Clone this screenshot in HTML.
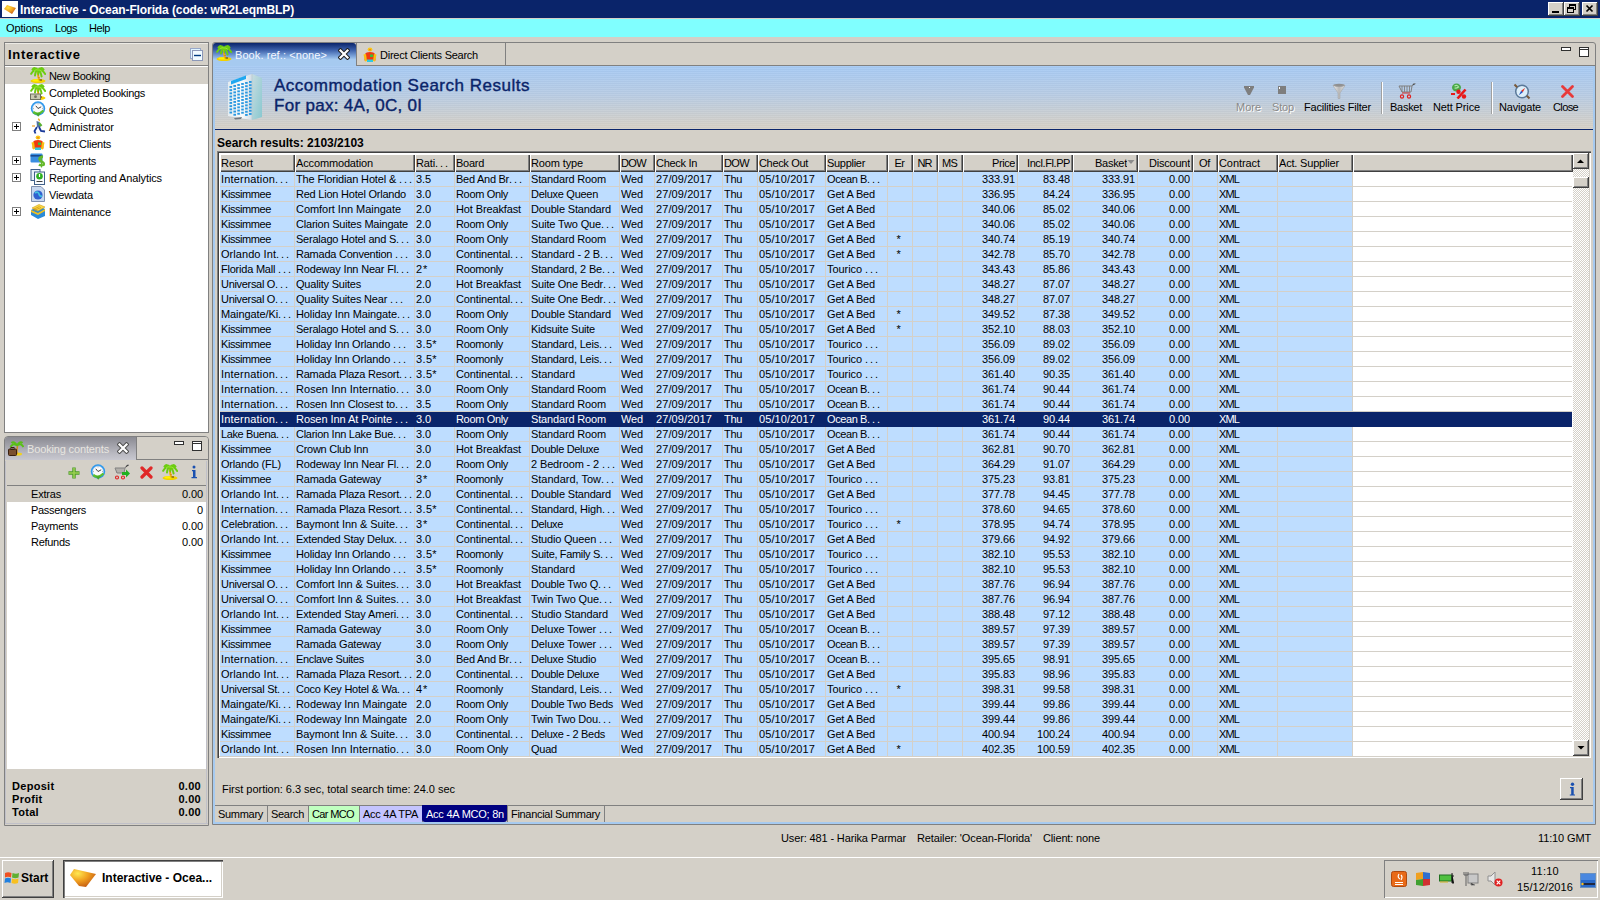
<!DOCTYPE html><html><head><meta charset="utf-8"><style>
html,body{margin:0;padding:0;}body{width:1600px;height:900px;overflow:hidden;position:relative;background:#D4D0C8;font-family:"Liberation Sans",sans-serif;}
.t{position:absolute;white-space:nowrap;}.b{position:absolute;}
</style></head><body>
<div class="b" style="left:0px;top:0px;width:1600px;height:18px;background:#0A246A"></div>
<div class="b" style="left:0px;top:18px;width:1600px;height:1px;background:#D4D0C8"></div>
<div class="b" style="left:2px;top:1px;width:16px;height:16px;background:#fff"></div>
<svg class="b" style="left:2px;top:1px" width="16" height="16" viewBox="0 0 16 16"><defs><radialGradient id="og" cx="0.35" cy="0.3" r="0.8"><stop offset="0" stop-color="#FFE040"/><stop offset="0.5" stop-color="#F0A020"/><stop offset="1" stop-color="#C05010"/></radialGradient></defs><path d="M2 8 L5 4 L14 7 L10 13 Z" fill="url(#og)"/></svg>
<div class="t" style="left:20px;top:3px;font:bold 12px/14px 'Liberation Sans', sans-serif;color:#fff;letter-spacing:-0.1px">Interactive - Ocean-Florida (code: wR2LeqmBLP)</div>
<div class="b" style="left:1548px;top:2px;width:16px;height:14px;background:#D4D0C8;box-shadow:inset -1px -1px 0 #404040, inset 1px 1px 0 #FFFFFF, inset -2px -2px 0 #808080, inset 2px 2px 0 #D4D0C8;"></div>
<div class="b" style="left:1564px;top:2px;width:16px;height:14px;background:#D4D0C8;box-shadow:inset -1px -1px 0 #404040, inset 1px 1px 0 #FFFFFF, inset -2px -2px 0 #808080, inset 2px 2px 0 #D4D0C8;"></div>
<div class="b" style="left:1582px;top:2px;width:16px;height:14px;background:#D4D0C8;box-shadow:inset -1px -1px 0 #404040, inset 1px 1px 0 #FFFFFF, inset -2px -2px 0 #808080, inset 2px 2px 0 #D4D0C8;"></div>
<div class="b" style="left:1552px;top:11px;width:7px;height:2px;background:#000"></div>
<svg class="b" style="left:1564px;top:2px" width="16" height="14" viewBox="0 0 16 14"><rect x="5.5" y="2.5" width="6" height="5" fill="none" stroke="#000"/><rect x="5" y="2" width="7" height="2" fill="#000"/><rect x="3.5" y="5.5" width="6" height="5" fill="#D4D0C8" stroke="#000"/><rect x="3" y="5" width="7" height="2" fill="#000"/></svg>
<svg class="b" style="left:1582px;top:2px" width="16" height="14" viewBox="0 0 16 14"><path d="M4.5 3.5 L10.5 9.5 M10.5 3.5 L4.5 9.5" stroke="#000" stroke-width="1.7"/></svg>
<div class="b" style="left:0px;top:19px;width:1600px;height:18px;background:#80FFFF"></div>
<div class="t" style="left:6px;top:21px;font:11px/14px 'Liberation Sans', sans-serif;color:#000;letter-spacing:-0.132px;">Options</div>
<div class="t" style="left:55px;top:21px;font:11px/14px 'Liberation Sans', sans-serif;color:#000;letter-spacing:-0.465px;">Logs</div>
<div class="t" style="left:89px;top:21px;font:11px/14px 'Liberation Sans', sans-serif;color:#000;letter-spacing:-0.406px;">Help</div>
<div class="b" style="left:4px;top:42px;width:205px;height:391px;background:#fff;border:1px solid #808080;box-sizing:border-box"></div>
<div class="b" style="left:5px;top:43px;width:203px;height:22px;background:#D4D0C8"></div>
<div class="b" style="left:5px;top:43px;width:203px;height:1px;background:#ECEAE4"></div>
<div class="b" style="left:5px;top:65px;width:203px;height:1px;background:#808080"></div>
<div class="t" style="left:8px;top:48px;font:bold 13px/14px 'Liberation Sans', sans-serif;color:#000;letter-spacing:0.7px">Interactive</div>
<svg class="b" style="left:190px;top:48px" width="13" height="13" viewBox="0 0 13 13"><rect x="0.5" y="0.5" width="10" height="10" fill="#E0F4FF" stroke="#98A8C8"/><rect x="2.5" y="2.5" width="10" height="10" fill="#F0FAFF" stroke="#8C98B8"/><path d="M4 7.5 L11 7.5" stroke="#003A80" stroke-width="1.4"/></svg>
<div class="b" style="left:5px;top:67px;width:203px;height:17px;background:#D4D0C8"></div>
<svg class="b" style="left:30px;top:67px" width="16" height="16" viewBox="0 0 16 16"><ellipse cx="8" cy="14" rx="7.5" ry="2" fill="#F2D000"/><ellipse cx="6.5" cy="13.4" rx="4" ry="1.1" fill="#FFF200"/><path d="M7.6 4.5 Q8 10 9.4 13.5" stroke="#F0B010" stroke-width="2" fill="none"/><path d="M8.3 7.8 L9 8.4 M8.9 10.4 L9.5 11" stroke="#A04A10" stroke-width="1"/><path d="M9.5 13 L12 13" stroke="#503010" stroke-width="1"/><path d="M8 3 Q4 1.5 1.2 6.8 M8 3 Q12 1.5 15.2 7 M8 3 Q5.5 3.5 5 8.5 M8 3 Q10.5 3.5 11.6 9.5 M8 3 Q4.5 -0.5 2.5 2.5 M8 3 Q11.5 -0.5 13.5 2.5 M8 3 Q8.5 4 8.3 7" stroke="#6CCC10" stroke-width="2" fill="none" stroke-linecap="round"/><path d="M8 3 Q6 2 4 4 M8 3 Q10 2.5 12 4.5" stroke="#98E830" stroke-width="1" fill="none"/></svg>
<div class="t" style="left:49px;top:69px;font:11px/14px 'Liberation Sans', sans-serif;color:#000;letter-spacing:-0.348px;">New Booking</div>
<svg class="b" style="left:30px;top:84px" width="16" height="16" viewBox="0 0 16 16"><ellipse cx="8" cy="14" rx="7.5" ry="2" fill="#F2D000"/><ellipse cx="6.5" cy="13.4" rx="4" ry="1.1" fill="#FFF200"/><path d="M7.6 4.5 Q8 10 9.4 13.5" stroke="#F0B010" stroke-width="2" fill="none"/><path d="M8.3 7.8 L9 8.4 M8.9 10.4 L9.5 11" stroke="#A04A10" stroke-width="1"/><path d="M9.5 13 L12 13" stroke="#503010" stroke-width="1"/><path d="M8 3 Q4 1.5 1.2 6.8 M8 3 Q12 1.5 15.2 7 M8 3 Q5.5 3.5 5 8.5 M8 3 Q10.5 3.5 11.6 9.5 M8 3 Q4.5 -0.5 2.5 2.5 M8 3 Q11.5 -0.5 13.5 2.5 M8 3 Q8.5 4 8.3 7" stroke="#6CCC10" stroke-width="2" fill="none" stroke-linecap="round"/><path d="M8 3 Q6 2 4 4 M8 3 Q10 2.5 12 4.5" stroke="#98E830" stroke-width="1" fill="none"/><rect x="0.5" y="10" width="10" height="5.5" fill="#C8C8B0" stroke="#707060" stroke-width="1"/><circle cx="5.5" cy="12.7" r="1.4" fill="#707060"/></svg>
<div class="t" style="left:49px;top:86px;font:11px/14px 'Liberation Sans', sans-serif;color:#000;letter-spacing:-0.306px;">Completed Bookings</div>
<svg class="b" style="left:30px;top:101px" width="16" height="16" viewBox="0 0 16 16"><circle cx="8" cy="7.5" r="7.2" fill="#2E98EC"/><circle cx="8" cy="7.5" r="5.4" fill="#FAFAFA" stroke="#9CC8F0" stroke-width="0.6"/><path d="M8 7.5 L5.8 4.8 M8 7.5 L11.2 5.8" stroke="#303030" stroke-width="0.9"/><path d="M8 2.6 L8 3.4 M12.9 7.5 L12.1 7.5 M3.1 7.5 L3.9 7.5" stroke="#808080" stroke-width="0.7"/><path d="M3.2 11 Q8 15 13.5 9.5" stroke="#5CC030" stroke-width="2.4" fill="none"/><path d="M5.8 12.2 L8.2 15.8 L10.8 12.2 Z" fill="#48A828"/></svg>
<div class="t" style="left:49px;top:103px;font:11px/14px 'Liberation Sans', sans-serif;color:#000;letter-spacing:-0.220px;">Quick Quotes</div>
<svg class="b" style="left:30px;top:118px" width="16" height="16" viewBox="0 0 16 16"><path d="M8 1 Q10 1.5 9 3" stroke="#F0B030" stroke-width="1.4" fill="none"/><path d="M6.5 3 L9.5 4 L10.5 9 L7 9 Z" fill="#5070A0"/><path d="M9 5 L11.5 8" stroke="#58B030" stroke-width="2.2"/><path d="M7 9 L4.5 13 L5.5 15.5 M9 9 L11 13 L15 13.5" stroke="#1A3A9A" stroke-width="1.8" fill="none"/><path d="M2 8 L5 8" stroke="#F0A020" stroke-width="1.2"/></svg>
<div class="t" style="left:49px;top:120px;font:11px/14px 'Liberation Sans', sans-serif;color:#000;letter-spacing:0.016px;">Administrator</div>
<svg class="b" style="left:12px;top:122px" width="9" height="9" viewBox="0 0 9 9"><rect x="0.5" y="0.5" width="8" height="8" fill="#fff" stroke="#808080"/><path d="M2 4.5 L7 4.5 M4.5 2 L4.5 7" stroke="#000" stroke-width="1"/></svg>
<svg class="b" style="left:30px;top:135px" width="16" height="16" viewBox="0 0 16 16"><ellipse cx="8" cy="2.6" rx="2.4" ry="2" fill="#F8C818"/><ellipse cx="8" cy="2.8" rx="1" ry="0.6" fill="#F06010"/><path d="M3 7 Q4 5 8 5 Q12 5 13 7 L13.5 13.5 L2.5 13.5 Z" fill="#F03A10"/><path d="M1.5 7.5 L4 7 L5 14 L3 14.5 Z" fill="#F8C010"/><path d="M14.5 7.5 L12 7 L11 14 L13 14.5 Z" fill="#F8C010"/><rect x="8" y="7.5" width="3" height="2.5" fill="#38C040"/><rect x="5" y="12.5" width="6" height="2.5" fill="#30C8E0"/></svg>
<div class="t" style="left:49px;top:137px;font:11px/14px 'Liberation Sans', sans-serif;color:#000;letter-spacing:-0.243px;">Direct Clients</div>
<svg class="b" style="left:30px;top:152px" width="16" height="16" viewBox="0 0 16 16"><rect x="0.5" y="1.5" width="12" height="9" rx="1" fill="#3A8EE0"/><rect x="0.5" y="3" width="12" height="1.6" fill="#1A4A90"/><path d="M13 5 Q9 4.5 9.5 7.5 Q10 9.5 12.5 10 Q14.5 11 13.5 13 Q11 14 9 12.5" stroke="#64B82A" stroke-width="2.4" fill="none"/><path d="M11.5 3.5 L11.5 15.5" stroke="#64B82A" stroke-width="1.2"/></svg>
<div class="t" style="left:49px;top:154px;font:11px/14px 'Liberation Sans', sans-serif;color:#000;letter-spacing:-0.240px;">Payments</div>
<svg class="b" style="left:12px;top:156px" width="9" height="9" viewBox="0 0 9 9"><rect x="0.5" y="0.5" width="8" height="8" fill="#fff" stroke="#808080"/><path d="M2 4.5 L7 4.5 M4.5 2 L4.5 7" stroke="#000" stroke-width="1"/></svg>
<svg class="b" style="left:30px;top:169px" width="16" height="16" viewBox="0 0 16 16"><rect x="1" y="0.5" width="9" height="11" fill="#E8F0F8" stroke="#40608A" stroke-width="1"/><rect x="4.5" y="3" width="10" height="12.5" fill="#F8FBFF" stroke="#40608A" stroke-width="1"/><circle cx="9.5" cy="7.2" r="3.3" fill="#2EB020"/><path d="M9.5 5 L9.5 8" stroke="#fff" stroke-width="1.2"/><path d="M6.5 12.5 L12.5 12.5" stroke="#404040" stroke-width="1"/></svg>
<div class="t" style="left:49px;top:171px;font:11px/14px 'Liberation Sans', sans-serif;color:#000;letter-spacing:-0.112px;">Reporting and Analytics</div>
<svg class="b" style="left:12px;top:173px" width="9" height="9" viewBox="0 0 9 9"><rect x="0.5" y="0.5" width="8" height="8" fill="#fff" stroke="#808080"/><path d="M2 4.5 L7 4.5 M4.5 2 L4.5 7" stroke="#000" stroke-width="1"/></svg>
<svg class="b" style="left:30px;top:186px" width="16" height="16" viewBox="0 0 16 16"><path d="M1.5 0.5 L11 0.5 L14.5 4 L14.5 15.5 L1.5 15.5 Z" fill="#C8D8F0" stroke="#8090B0" stroke-width="1"/><circle cx="8" cy="9" r="4.6" fill="#3060D0"/><path d="M5 7 Q8 5 9 8 Q10 11 12 10" stroke="#40C0E0" stroke-width="1.8" fill="none"/></svg>
<div class="t" style="left:49px;top:188px;font:11px/14px 'Liberation Sans', sans-serif;color:#000;letter-spacing:-0.133px;">Viewdata</div>
<svg class="b" style="left:30px;top:203px" width="16" height="16" viewBox="0 0 16 16"><path d="M1 7 L9 3 L15 6 L15 13 L8 16 L1 12 Z" fill="#2A8AD8"/><path d="M1 7 L8 10 L15 6 L15 8 L8 12 L1 9 Z" fill="#F0C020"/><path d="M2 5 L9 1.5 L15 4 L8 8 Z" fill="#F8D848" stroke="#D0A010" stroke-width="0.6"/><path d="M3 6.5 L9.5 3.5 M4 7.5 L11 4.5" stroke="#D09010" stroke-width="0.7"/></svg>
<div class="t" style="left:49px;top:205px;font:11px/14px 'Liberation Sans', sans-serif;color:#000;letter-spacing:-0.091px;">Maintenance</div>
<svg class="b" style="left:12px;top:207px" width="9" height="9" viewBox="0 0 9 9"><rect x="0.5" y="0.5" width="8" height="8" fill="#fff" stroke="#808080"/><path d="M2 4.5 L7 4.5 M4.5 2 L4.5 7" stroke="#000" stroke-width="1"/></svg>
<div class="b" style="left:4px;top:436px;width:205px;height:390px;background:#D4D0C8;border:1px solid #808080;box-sizing:border-box;border-radius:4px 4px 0 0"></div>
<div class="b" style="left:5px;top:437px;width:131px;height:23px;background:linear-gradient(#8A8A92,#B8B8C0 70%,#C8C8D0);border-radius:3px 0 0 0"></div>
<div class="b" style="left:136px;top:437px;width:72px;height:22px;background:#D4D0C8;border-left:1px solid #808080;box-sizing:border-box;border-radius:0 3px 0 0"></div>
<div class="b" style="left:136px;top:459px;width:72px;height:1px;background:#808080"></div>
<svg class="b" style="left:8px;top:440px" width="16" height="16" viewBox="0 0 16 16"><ellipse cx="10" cy="14" rx="4" ry="1.5" fill="#F2D21B"/><path d="M9.5 6 Q8.5 10 9 14" stroke="#D08A1C" stroke-width="1.5" fill="none"/><path d="M9 5.5 Q5 2.5 2.5 7 M9 5.5 Q13 2.5 15.5 7 M9 5.5 Q6 0.5 3.5 3 M9 5.5 Q12 0.5 14.5 3" stroke="#58C018" stroke-width="2" fill="none"/><rect x="0.5" y="9" width="8" height="6.5" rx="1" fill="#7A5030" stroke="#3A2010"/><rect x="3" y="7.5" width="3" height="2" fill="none" stroke="#3A2010"/></svg>
<div class="t" style="left:27px;top:442px;font:11px/14px 'Liberation Sans', sans-serif;color:#E8E6E0;letter-spacing:-0.149px;">Booking contents</div>
<svg class="b" style="left:117px;top:442px" width="12" height="12" viewBox="0 0 12 12"><path d="M2.5 2.5 L9.5 9.5 M9.5 2.5 L2.5 9.5" stroke="#505050" stroke-width="4.2" stroke-linecap="square"/><path d="M2.5 2.5 L9.5 9.5 M9.5 2.5 L2.5 9.5" stroke="#fff" stroke-width="2.2" stroke-linecap="square"/></svg>
<svg class="b" style="left:174px;top:441px" width="10" height="4" viewBox="0 0 10 4"><rect x="0.5" y="0.5" width="9" height="3" fill="#fff" stroke="#303030"/></svg>
<svg class="b" style="left:192px;top:441px" width="10" height="10" viewBox="0 0 10 10"><rect x="0.5" y="0.5" width="9" height="9" fill="#fff" stroke="#303030"/><path d="M1 2.5 L9 2.5" stroke="#303030"/></svg>
<div class="b" style="left:7px;top:461px;width:199px;height:24px;background:#D4D0C8"></div>
<div class="b" style="left:7px;top:485px;width:199px;height:1px;background:#808080"></div>
<div class="b" style="left:5px;top:461px;width:1px;height:362px;background:#C0C0C8"></div>
<svg class="b" style="left:67px;top:466px" width="14" height="14" viewBox="0 0 14 14"><path d="M7 1.5 L7 12.5 M1.5 7 L12.5 7" stroke="#4A9A2A" stroke-width="3.4"/><path d="M7 2 L7 12 M2 7 L12 7" stroke="#9AD050" stroke-width="1.6"/></svg>
<svg class="b" style="left:90px;top:464px" width="16" height="16" viewBox="0 0 16 16"><circle cx="8" cy="7.5" r="7.2" fill="#2E98EC"/><circle cx="8" cy="7.5" r="5.4" fill="#FAFAFA" stroke="#9CC8F0" stroke-width="0.6"/><path d="M8 7.5 L5.8 4.8 M8 7.5 L11.2 5.8" stroke="#303030" stroke-width="0.9"/><path d="M8 2.6 L8 3.4 M12.9 7.5 L12.1 7.5 M3.1 7.5 L3.9 7.5" stroke="#808080" stroke-width="0.7"/><path d="M3.2 11 Q8 15 13.5 9.5" stroke="#5CC030" stroke-width="2.4" fill="none"/><path d="M5.8 12.2 L8.2 15.8 L10.8 12.2 Z" fill="#48A828"/></svg>
<svg class="b" style="left:114px;top:464px" width="16" height="16" viewBox="0 0 16 16"><path d="M1 4 L11 4 L10 9 L3 9 Z" fill="none" stroke="#808080" stroke-width="1"/><path d="M3 4 L3 9 M5 4 L5 9 M7 4 L7 9 M9 4 L9 9 M11 4 L13 1 L15 1" stroke="#808080" stroke-width="0.8"/><circle cx="3" cy="13.5" r="1.5" fill="none" stroke="#E02020" stroke-width="1.1"/><circle cx="9" cy="13.5" r="1.5" fill="none" stroke="#E02020" stroke-width="1.1"/><path d="M8 8 L12 8 L12 5.5 L16 9.5 L12 13.5 L12 11 L8 11 Z" fill="#20B020"/></svg>
<svg class="b" style="left:140px;top:466px" width="13" height="13" viewBox="0 0 13 13"><path d="M2 2 L11 11 M11 2 L2 11" stroke="#E02828" stroke-width="3.2" stroke-linecap="round"/></svg>
<svg class="b" style="left:162px;top:464px" width="16" height="16" viewBox="0 0 16 16"><ellipse cx="8" cy="14" rx="7.5" ry="2" fill="#F2D000"/><ellipse cx="6.5" cy="13.4" rx="4" ry="1.1" fill="#FFF200"/><path d="M7.6 4.5 Q8 10 9.4 13.5" stroke="#F0B010" stroke-width="2" fill="none"/><path d="M8.3 7.8 L9 8.4 M8.9 10.4 L9.5 11" stroke="#A04A10" stroke-width="1"/><path d="M9.5 13 L12 13" stroke="#503010" stroke-width="1"/><path d="M8 3 Q4 1.5 1.2 6.8 M8 3 Q12 1.5 15.2 7 M8 3 Q5.5 3.5 5 8.5 M8 3 Q10.5 3.5 11.6 9.5 M8 3 Q4.5 -0.5 2.5 2.5 M8 3 Q11.5 -0.5 13.5 2.5 M8 3 Q8.5 4 8.3 7" stroke="#6CCC10" stroke-width="2" fill="none" stroke-linecap="round"/><path d="M8 3 Q6 2 4 4 M8 3 Q10 2.5 12 4.5" stroke="#98E830" stroke-width="1" fill="none"/></svg>
<svg class="b" style="left:189px;top:465px" width="10" height="14" viewBox="0 0 10 14"><circle cx="5" cy="2" r="1.5" fill="#1A50B0"/><path d="M3 5 L6.5 5 L6.5 12 L8 12 L8 13.2 L2.5 13.2 L2.5 12 L4 12 L4 6.2 L3 6.2 Z" fill="#1A50B0"/></svg>
<div class="b" style="left:7px;top:486px;width:199px;height:283px;background:#fff"></div>
<div class="b" style="left:7px;top:486px;width:199px;height:16px;background:#D4D0C8"></div>
<div class="t" style="left:31px;top:487px;font:11px/14px 'Liberation Sans', sans-serif;color:#000;letter-spacing:-0.198px;">Extras</div>
<div class="t" style="right:1397px;top:487px;font:11px/14px 'Liberation Sans', sans-serif;color:#000;text-align:right;letter-spacing:-0.105px;">0.00</div>
<div class="t" style="left:31px;top:503px;font:11px/14px 'Liberation Sans', sans-serif;color:#000;letter-spacing:-0.309px;">Passengers</div>
<div class="t" style="right:1397px;top:503px;font:11px/14px 'Liberation Sans', sans-serif;color:#000;text-align:right;letter-spacing:-0.125px;">0</div>
<div class="t" style="left:31px;top:519px;font:11px/14px 'Liberation Sans', sans-serif;color:#000;letter-spacing:-0.240px;">Payments</div>
<div class="t" style="right:1397px;top:519px;font:11px/14px 'Liberation Sans', sans-serif;color:#000;text-align:right;letter-spacing:-0.105px;">0.00</div>
<div class="t" style="left:31px;top:535px;font:11px/14px 'Liberation Sans', sans-serif;color:#000;letter-spacing:-0.283px;">Refunds</div>
<div class="t" style="right:1397px;top:535px;font:11px/14px 'Liberation Sans', sans-serif;color:#000;text-align:right;letter-spacing:-0.105px;">0.00</div>
<div class="t" style="left:12px;top:779px;font:bold 11px/14px 'Liberation Sans', sans-serif;color:#000;letter-spacing:0.3px">Deposit</div>
<div class="t" style="right:1399px;top:779px;font:bold 11px/14px 'Liberation Sans', sans-serif;color:#000;text-align:right;letter-spacing:0.3px">0.00</div>
<div class="t" style="left:12px;top:792px;font:bold 11px/14px 'Liberation Sans', sans-serif;color:#000;letter-spacing:0.3px">Profit</div>
<div class="t" style="right:1399px;top:792px;font:bold 11px/14px 'Liberation Sans', sans-serif;color:#000;text-align:right;letter-spacing:0.3px">0.00</div>
<div class="t" style="left:12px;top:805px;font:bold 11px/14px 'Liberation Sans', sans-serif;color:#000;letter-spacing:0.3px">Total</div>
<div class="t" style="right:1399px;top:805px;font:bold 11px/14px 'Liberation Sans', sans-serif;color:#000;text-align:right;letter-spacing:0.3px">0.00</div>
<div class="b" style="left:5px;top:823px;width:203px;height:1px;background:#C0C0C8"></div>
<div class="b" style="left:206px;top:461px;width:1px;height:362px;background:#C0C0C8"></div>
<div class="b" style="left:212px;top:42px;width:1384px;height:783px;background:#D4D0C8;border:1px solid #808080;box-sizing:border-box;border-radius:3px 3px 0 0"></div>
<div class="b" style="left:213px;top:66px;width:2px;height:758px;background:#A6CAF0"></div>
<div class="b" style="left:1593px;top:66px;width:2px;height:758px;background:#A6CAF0"></div>
<div class="b" style="left:213px;top:822px;width:1382px;height:2px;background:#A6CAF0"></div>
<div class="b" style="left:356px;top:65px;width:1239px;height:1px;background:#808080"></div>
<div class="b" style="left:213px;top:43px;width:143px;height:23px;background:linear-gradient(#0A246A 0%, #3A5EA8 30%, #7EA6DC 58%, #A6CAF0 72%, #A6CAF0 100%);border-radius:3px 3px 0 0"></div>
<svg class="b" style="left:216px;top:45px" width="16" height="16" viewBox="0 0 16 16"><ellipse cx="8" cy="14" rx="7.5" ry="2" fill="#F2D000"/><ellipse cx="6.5" cy="13.4" rx="4" ry="1.1" fill="#FFF200"/><path d="M7.6 4.5 Q8 10 9.4 13.5" stroke="#F0B010" stroke-width="2" fill="none"/><path d="M8.3 7.8 L9 8.4 M8.9 10.4 L9.5 11" stroke="#A04A10" stroke-width="1"/><path d="M9.5 13 L12 13" stroke="#503010" stroke-width="1"/><path d="M8 3 Q4 1.5 1.2 6.8 M8 3 Q12 1.5 15.2 7 M8 3 Q5.5 3.5 5 8.5 M8 3 Q10.5 3.5 11.6 9.5 M8 3 Q4.5 -0.5 2.5 2.5 M8 3 Q11.5 -0.5 13.5 2.5 M8 3 Q8.5 4 8.3 7" stroke="#6CCC10" stroke-width="2" fill="none" stroke-linecap="round"/><path d="M8 3 Q6 2 4 4 M8 3 Q10 2.5 12 4.5" stroke="#98E830" stroke-width="1" fill="none"/></svg>
<div class="t" style="left:235px;top:48px;font:11px/14px 'Liberation Sans', sans-serif;color:#F4F8FF;letter-spacing:0.082px;">Book. ref.: &lt;none&gt;</div>
<svg class="b" style="left:338px;top:48px" width="12" height="12" viewBox="0 0 12 12"><path d="M2.5 2.5 L9.5 9.5 M9.5 2.5 L2.5 9.5" stroke="#202020" stroke-width="4.2" stroke-linecap="square"/><path d="M2.5 2.5 L9.5 9.5 M9.5 2.5 L2.5 9.5" stroke="#fff" stroke-width="2.2" stroke-linecap="square"/></svg>
<div class="b" style="left:505px;top:43px;width:1px;height:22px;background:#808080"></div>
<div class="b" style="left:356px;top:43px;width:1px;height:22px;background:#808080"></div>
<svg class="b" style="left:362px;top:47px" width="16" height="16" viewBox="0 0 16 16"><ellipse cx="8" cy="2.6" rx="2.4" ry="2" fill="#F8C818"/><ellipse cx="8" cy="2.8" rx="1" ry="0.6" fill="#F06010"/><path d="M3 7 Q4 5 8 5 Q12 5 13 7 L13.5 13.5 L2.5 13.5 Z" fill="#F03A10"/><path d="M1.5 7.5 L4 7 L5 14 L3 14.5 Z" fill="#F8C010"/><path d="M14.5 7.5 L12 7 L11 14 L13 14.5 Z" fill="#F8C010"/><rect x="8" y="7.5" width="3" height="2.5" fill="#38C040"/><rect x="5" y="12.5" width="6" height="2.5" fill="#30C8E0"/></svg>
<div class="t" style="left:380px;top:48px;font:11px/14px 'Liberation Sans', sans-serif;color:#000;letter-spacing:-0.254px;">Direct Clients Search</div>
<svg class="b" style="left:1561px;top:47px" width="10" height="4" viewBox="0 0 10 4"><rect x="0.5" y="0.5" width="9" height="3" fill="#fff" stroke="#303030"/></svg>
<svg class="b" style="left:1579px;top:47px" width="10" height="10" viewBox="0 0 10 10"><rect x="0.5" y="0.5" width="9" height="9" fill="#fff" stroke="#303030"/><path d="M1 2.5 L9 2.5" stroke="#303030"/></svg>
<div class="b" style="left:215px;top:66px;width:1378px;height:63px;background:repeating-linear-gradient(rgba(255,255,255,0.06) 0 1px, rgba(0,0,0,0.02) 1px 2px), linear-gradient(#A6CAF4, #B8CCE4 45%, #D4D0C8 95%)"></div>
<div class="b" style="left:215px;top:129px;width:1378px;height:1px;background:#0A246A"></div>
<svg class="b" style="left:226px;top:72px" width="38" height="50" viewBox="0 0 38 50"><defs><linearGradient id="bg1" x1="0" x2="1"><stop offset="0" stop-color="#E4ECF0"/><stop offset="0.6" stop-color="#F8FAFC"/><stop offset="1" stop-color="#D0DCE4"/></linearGradient><linearGradient id="bg2" x1="0" x2="1" y1="0" y2="1"><stop offset="0" stop-color="#C8DCE0"/><stop offset="1" stop-color="#88C8D0"/></linearGradient></defs><path d="M2 10 L26 2 L26 48 L2 44 Z" fill="url(#bg1)"/><path d="M26 2 L36 6 L36 45 L26 48 Z" fill="url(#bg2)"/><path d="M26 2 L26 48" stroke="#B8C8D0" stroke-width="0.8"/><path d="M5 9 L20 3.5 L20 7 L5 12.5 Z" fill="#20A8F0"/><rect x="3.5" y="14.0" width="2.6" height="1.9" fill="#2A98E0"/><rect x="3.5" y="17.2" width="2.6" height="1.9" fill="#2A98E0"/><rect x="3.5" y="20.4" width="2.6" height="1.9" fill="#2A98E0"/><rect x="3.5" y="23.6" width="2.6" height="1.9" fill="#2A98E0"/><rect x="3.5" y="26.8" width="2.6" height="1.9" fill="#2A98E0"/><rect x="3.5" y="30.0" width="2.6" height="1.9" fill="#2A98E0"/><rect x="3.5" y="33.2" width="2.6" height="1.9" fill="#2A98E0"/><rect x="3.5" y="36.4" width="2.6" height="1.9" fill="#2A98E0"/><rect x="3.5" y="39.6" width="2.6" height="1.9" fill="#2A98E0"/><rect x="7.4" y="13.0" width="2.6" height="1.9" fill="#2A98E0"/><rect x="7.4" y="16.2" width="2.6" height="1.9" fill="#2A98E0"/><rect x="7.4" y="19.4" width="2.6" height="1.9" fill="#2A98E0"/><rect x="7.4" y="22.6" width="2.6" height="1.9" fill="#2A98E0"/><rect x="7.4" y="25.8" width="2.6" height="1.9" fill="#2A98E0"/><rect x="7.4" y="29.0" width="2.6" height="1.9" fill="#2A98E0"/><rect x="7.4" y="32.2" width="2.6" height="1.9" fill="#2A98E0"/><rect x="7.4" y="35.4" width="2.6" height="1.9" fill="#2A98E0"/><rect x="7.4" y="38.6" width="2.6" height="1.9" fill="#2A98E0"/><rect x="7.4" y="41.8" width="2.6" height="1.9" fill="#2A98E0"/><rect x="11.3" y="12.0" width="2.6" height="1.9" fill="#2A98E0"/><rect x="11.3" y="15.2" width="2.6" height="1.9" fill="#2A98E0"/><rect x="11.3" y="18.4" width="2.6" height="1.9" fill="#2A98E0"/><rect x="11.3" y="21.6" width="2.6" height="1.9" fill="#2A98E0"/><rect x="11.3" y="24.8" width="2.6" height="1.9" fill="#2A98E0"/><rect x="11.3" y="28.0" width="2.6" height="1.9" fill="#2A98E0"/><rect x="11.3" y="31.2" width="2.6" height="1.9" fill="#2A98E0"/><rect x="11.3" y="34.4" width="2.6" height="1.9" fill="#2A98E0"/><rect x="11.3" y="37.6" width="2.6" height="1.9" fill="#2A98E0"/><rect x="11.3" y="40.8" width="2.6" height="1.9" fill="#2A98E0"/><rect x="15.2" y="11.0" width="2.6" height="1.9" fill="#2A98E0"/><rect x="15.2" y="14.2" width="2.6" height="1.9" fill="#2A98E0"/><rect x="15.2" y="17.4" width="2.6" height="1.9" fill="#2A98E0"/><rect x="15.2" y="20.6" width="2.6" height="1.9" fill="#2A98E0"/><rect x="15.2" y="23.8" width="2.6" height="1.9" fill="#2A98E0"/><rect x="15.2" y="27.0" width="2.6" height="1.9" fill="#2A98E0"/><rect x="15.2" y="30.2" width="2.6" height="1.9" fill="#2A98E0"/><rect x="15.2" y="33.4" width="2.6" height="1.9" fill="#2A98E0"/><rect x="15.2" y="36.6" width="2.6" height="1.9" fill="#2A98E0"/><rect x="15.2" y="39.8" width="2.6" height="1.9" fill="#2A98E0"/><rect x="19.1" y="10.0" width="2.6" height="1.9" fill="#2A98E0"/><rect x="19.1" y="13.2" width="2.6" height="1.9" fill="#2A98E0"/><rect x="19.1" y="16.4" width="2.6" height="1.9" fill="#2A98E0"/><rect x="19.1" y="19.6" width="2.6" height="1.9" fill="#2A98E0"/><rect x="19.1" y="22.8" width="2.6" height="1.9" fill="#2A98E0"/><rect x="19.1" y="26.0" width="2.6" height="1.9" fill="#2A98E0"/><rect x="19.1" y="29.2" width="2.6" height="1.9" fill="#2A98E0"/><rect x="19.1" y="32.4" width="2.6" height="1.9" fill="#2A98E0"/><rect x="19.1" y="35.6" width="2.6" height="1.9" fill="#2A98E0"/><rect x="19.1" y="38.8" width="2.6" height="1.9" fill="#2A98E0"/><rect x="19.1" y="42.0" width="2.6" height="1.9" fill="#2A98E0"/><rect x="23.0" y="9.0" width="2.6" height="1.9" fill="#2A98E0"/><rect x="23.0" y="12.2" width="2.6" height="1.9" fill="#2A98E0"/><rect x="23.0" y="15.4" width="2.6" height="1.9" fill="#2A98E0"/><rect x="23.0" y="18.6" width="2.6" height="1.9" fill="#2A98E0"/><rect x="23.0" y="21.8" width="2.6" height="1.9" fill="#2A98E0"/><rect x="23.0" y="25.0" width="2.6" height="1.9" fill="#2A98E0"/><rect x="23.0" y="28.2" width="2.6" height="1.9" fill="#2A98E0"/><rect x="23.0" y="31.4" width="2.6" height="1.9" fill="#2A98E0"/><rect x="23.0" y="34.6" width="2.6" height="1.9" fill="#2A98E0"/><rect x="23.0" y="37.8" width="2.6" height="1.9" fill="#2A98E0"/><rect x="23.0" y="41.0" width="2.6" height="1.9" fill="#2A98E0"/><path d="M8 46 L16 45 L15 47 L9 47.5 Z" fill="#707880"/></svg>
<div class="t" style="left:274px;top:76px;font:17px/20px 'Liberation Sans', sans-serif;color:#0A246A;letter-spacing:0.5px;-webkit-text-stroke:0.4px #0A246A">Accommodation Search Results</div>
<div class="t" style="left:274px;top:96px;font:17px/20px 'Liberation Sans', sans-serif;color:#0A246A;letter-spacing:0.3px;-webkit-text-stroke:0.4px #0A246A">For pax: 4A, 0C, 0I</div>
<div class="t" style="left:1237px;top:101px;font:11px/14px 'Liberation Sans', sans-serif;color:#FFFFFF;letter-spacing:-0.016px;">More</div>
<div class="t" style="left:1236px;top:100px;font:11px/14px 'Liberation Sans', sans-serif;color:#8A8A8A;letter-spacing:-0.016px;">More</div>
<div class="t" style="left:1273px;top:101px;font:11px/14px 'Liberation Sans', sans-serif;color:#FFFFFF;letter-spacing:-0.160px;">Stop</div>
<div class="t" style="left:1272px;top:100px;font:11px/14px 'Liberation Sans', sans-serif;color:#8A8A8A;letter-spacing:-0.160px;">Stop</div>
<div class="t" style="left:1304px;top:100px;font:11px/14px 'Liberation Sans', sans-serif;color:#000;letter-spacing:-0.194px;">Facilities Filter</div>
<div class="t" style="left:1390px;top:100px;font:11px/14px 'Liberation Sans', sans-serif;color:#000;letter-spacing:-0.273px;">Basket</div>
<div class="t" style="left:1433px;top:100px;font:11px/14px 'Liberation Sans', sans-serif;color:#000;letter-spacing:-0.130px;">Nett Price</div>
<div class="t" style="left:1499px;top:100px;font:11px/14px 'Liberation Sans', sans-serif;color:#000;letter-spacing:-0.178px;">Navigate</div>
<div class="t" style="left:1553px;top:100px;font:11px/14px 'Liberation Sans', sans-serif;color:#000;letter-spacing:-0.625px;">Close</div>
<svg class="b" style="left:1241px;top:84px" width="16" height="16" viewBox="0 0 16 16"><path d="M3 2 L13 2 L13 3.5 L9 11 L7 11 L3 3.5 Z" fill="#7E7E7E"/><rect x="8" y="3" width="1" height="1" fill="#fff"/></svg>
<svg class="b" style="left:1274px;top:84px" width="16" height="16" viewBox="0 0 16 16"><rect x="4" y="2" width="8" height="8" fill="#7E7E7E"/><rect x="5" y="3" width="1" height="2" fill="#fff"/></svg>
<svg class="b" style="left:1331px;top:83px" width="16" height="17" viewBox="0 0 16 17"><defs><linearGradient id="fn" x1="0" x2="1"><stop offset="0" stop-color="#F0F0F0"/><stop offset="0.5" stop-color="#B8B8B8"/><stop offset="1" stop-color="#E0E0E0"/></linearGradient></defs><ellipse cx="8" cy="2.5" rx="6" ry="1.8" fill="#909090"/><path d="M2 2.5 Q8 5 14 2.5 L9 10 L9 15.5 L7 15.5 L7 10 Z" fill="url(#fn)" stroke="#A0A0A0" stroke-width="0.5"/></svg>
<div class="b" style="left:1381px;top:82px;width:1px;height:32px;background:#A0A0A0;box-shadow:1px 0 0 #fff"></div>
<svg class="b" style="left:1398px;top:83px" width="18" height="16" viewBox="0 0 18 16"><path d="M1 3 L14 3 L13 9 L4 9 Z" fill="none" stroke="#808080"/><path d="M4 3 L4 9 M6.5 3 L6.5 9 M9 3 L9 9 M11.5 3 L11.5 9 M14 3 L15.5 0.8 L17.5 0.8" stroke="#808080" stroke-width="0.9"/><path d="M4 10 L12 10" stroke="#D03030"/><circle cx="4" cy="13.5" r="1.6" fill="none" stroke="#E02020" stroke-width="1.2"/><circle cx="11" cy="13.5" r="1.6" fill="none" stroke="#E02020" stroke-width="1.2"/></svg>
<svg class="b" style="left:1449px;top:83px" width="18" height="16" viewBox="0 0 18 16"><ellipse cx="7.5" cy="4.5" rx="4.5" ry="4" fill="#48A848"/><path d="M5.5 3 Q8.5 1.5 9.5 4 Q7.5 5.5 5.5 5" stroke="#B0E8A8" stroke-width="1.2" fill="none"/><path d="M2 11 L6 11" stroke="#E81818" stroke-width="2"/><circle cx="9.5" cy="8.8" r="2.2" fill="#E81818"/><circle cx="15" cy="13.5" r="2.2" fill="#E81818"/><path d="M8.5 15.5 L16.5 6.5" stroke="#E81818" stroke-width="2.6"/></svg>
<div class="b" style="left:1491px;top:82px;width:1px;height:32px;background:#A0A0A0;box-shadow:1px 0 0 #fff"></div>
<svg class="b" style="left:1513px;top:83px" width="18" height="17" viewBox="0 0 18 17"><circle cx="9" cy="8.5" r="6.3" fill="#DCEEFA" stroke="#5A7898" stroke-width="1.5"/><path d="M12.2 4.8 L9.8 9.3 L8.2 7.7 Z" fill="#E03020"/><path d="M5.8 12.2 L8.2 7.7 L9.8 9.3 Z" fill="#2050C0"/><path d="M1.5 1.5 L4.2 4.2" stroke="#7A5A3A" stroke-width="2"/><path d="M13.8 12.8 L16.5 15.5" stroke="#7A5A3A" stroke-width="2"/></svg>
<svg class="b" style="left:1559px;top:84px" width="16" height="16" viewBox="0 0 16 16"><path d="M3.5 2.5 L13.5 12.5 M13.5 2.5 L3.5 12.5" stroke="#E83A3A" stroke-width="2.8" stroke-linecap="round"/></svg>
<div class="t" style="left:217px;top:136px;font:bold 12px/14px 'Liberation Sans', sans-serif;color:#000;">Search results: 2103/2103</div>
<div class="b" style="left:217px;top:151px;width:1374px;height:607px;background:#fff;box-shadow:inset 1px 1px 0 #808080, inset 2px 2px 0 #404040, inset -1px -1px 0 #FFFFFF, inset -2px -2px 0 #D4D0C8"></div>
<div class="b" style="left:220px;top:154px;width:75px;height:18px;background:#D4D0C8;box-shadow:inset 1px 1px 0 #FFFFFF, inset -1px -1px 0 #404040, inset -2px -2px 0 #808080;"></div>
<div class="t" style="left:221px;width:73px;overflow:hidden;top:156px;font:11px/14px 'Liberation Sans', sans-serif;color:#000;letter-spacing:-0.068px;">Resort</div>
<div class="b" style="left:295px;top:154px;width:120px;height:18px;background:#D4D0C8;box-shadow:inset 1px 1px 0 #FFFFFF, inset -1px -1px 0 #404040, inset -2px -2px 0 #808080;"></div>
<div class="t" style="left:296px;width:118px;overflow:hidden;top:156px;font:11px/14px 'Liberation Sans', sans-serif;color:#000;letter-spacing:-0.144px;">Accommodation</div>
<div class="b" style="left:415px;top:154px;width:40px;height:18px;background:#D4D0C8;box-shadow:inset 1px 1px 0 #FFFFFF, inset -1px -1px 0 #404040, inset -2px -2px 0 #808080;"></div>
<div class="t" style="left:416px;width:38px;overflow:hidden;top:156px;font:11px/14px 'Liberation Sans', sans-serif;color:#000;letter-spacing:-0.141px;">Rati<span style="letter-spacing:1.94px">...</span></div>
<div class="b" style="left:455px;top:154px;width:75px;height:18px;background:#D4D0C8;box-shadow:inset 1px 1px 0 #FFFFFF, inset -1px -1px 0 #404040, inset -2px -2px 0 #808080;"></div>
<div class="t" style="left:456px;width:73px;overflow:hidden;top:156px;font:11px/14px 'Liberation Sans', sans-serif;color:#000;letter-spacing:-0.272px;">Board</div>
<div class="b" style="left:530px;top:154px;width:90px;height:18px;background:#D4D0C8;box-shadow:inset 1px 1px 0 #FFFFFF, inset -1px -1px 0 #404040, inset -2px -2px 0 #808080;"></div>
<div class="t" style="left:531px;width:88px;overflow:hidden;top:156px;font:11px/14px 'Liberation Sans', sans-serif;color:#000;letter-spacing:-0.134px;">Room type</div>
<div class="b" style="left:620px;top:154px;width:35px;height:18px;background:#D4D0C8;box-shadow:inset 1px 1px 0 #FFFFFF, inset -1px -1px 0 #404040, inset -2px -2px 0 #808080;"></div>
<div class="t" style="left:621px;width:33px;overflow:hidden;top:156px;font:11px/14px 'Liberation Sans', sans-serif;color:#000;letter-spacing:-0.630px;">DOW</div>
<div class="b" style="left:655px;top:154px;width:68px;height:18px;background:#D4D0C8;box-shadow:inset 1px 1px 0 #FFFFFF, inset -1px -1px 0 #404040, inset -2px -2px 0 #808080;"></div>
<div class="t" style="left:656px;width:66px;overflow:hidden;top:156px;font:11px/14px 'Liberation Sans', sans-serif;color:#000;letter-spacing:-0.303px;">Check In</div>
<div class="b" style="left:723px;top:154px;width:35px;height:18px;background:#D4D0C8;box-shadow:inset 1px 1px 0 #FFFFFF, inset -1px -1px 0 #404040, inset -2px -2px 0 #808080;"></div>
<div class="t" style="left:724px;width:33px;overflow:hidden;top:156px;font:11px/14px 'Liberation Sans', sans-serif;color:#000;letter-spacing:-0.630px;">DOW</div>
<div class="b" style="left:758px;top:154px;width:68px;height:18px;background:#D4D0C8;box-shadow:inset 1px 1px 0 #FFFFFF, inset -1px -1px 0 #404040, inset -2px -2px 0 #808080;"></div>
<div class="t" style="left:759px;width:66px;overflow:hidden;top:156px;font:11px/14px 'Liberation Sans', sans-serif;color:#000;letter-spacing:-0.330px;">Check Out</div>
<div class="b" style="left:826px;top:154px;width:62px;height:18px;background:#D4D0C8;box-shadow:inset 1px 1px 0 #FFFFFF, inset -1px -1px 0 #404040, inset -2px -2px 0 #808080;"></div>
<div class="t" style="left:827px;width:60px;overflow:hidden;top:156px;font:11px/14px 'Liberation Sans', sans-serif;color:#000;letter-spacing:-0.295px;">Supplier</div>
<div class="b" style="left:888px;top:154px;width:25px;height:18px;background:#D4D0C8;box-shadow:inset 1px 1px 0 #FFFFFF, inset -1px -1px 0 #404040, inset -2px -2px 0 #808080;"></div>
<div class="t" style="left:887px;width:25px;top:156px;font:11px/14px 'Liberation Sans', sans-serif;color:#000;text-align:center;letter-spacing:-0.500px;">Er</div>
<div class="b" style="left:913px;top:154px;width:25px;height:18px;background:#D4D0C8;box-shadow:inset 1px 1px 0 #FFFFFF, inset -1px -1px 0 #404040, inset -2px -2px 0 #808080;"></div>
<div class="t" style="left:912px;width:25px;top:156px;font:11px/14px 'Liberation Sans', sans-serif;color:#000;text-align:center;letter-spacing:-0.945px;">NR</div>
<div class="b" style="left:938px;top:154px;width:25px;height:18px;background:#D4D0C8;box-shadow:inset 1px 1px 0 #FFFFFF, inset -1px -1px 0 #404040, inset -2px -2px 0 #808080;"></div>
<div class="t" style="left:937px;width:25px;top:156px;font:11px/14px 'Liberation Sans', sans-serif;color:#000;text-align:center;letter-spacing:-0.750px;">MS</div>
<div class="b" style="left:963px;top:154px;width:55px;height:18px;background:#D4D0C8;box-shadow:inset 1px 1px 0 #FFFFFF, inset -1px -1px 0 #404040, inset -2px -2px 0 #808080;"></div>
<div class="t" style="left:963px;width:52px;overflow:hidden;top:156px;font:11px/14px 'Liberation Sans', sans-serif;color:#000;text-align:right;letter-spacing:-0.412px;">Price</div>
<div class="b" style="left:1018px;top:154px;width:55px;height:18px;background:#D4D0C8;box-shadow:inset 1px 1px 0 #FFFFFF, inset -1px -1px 0 #404040, inset -2px -2px 0 #808080;"></div>
<div class="t" style="left:1018px;width:52px;overflow:hidden;top:156px;font:11px/14px 'Liberation Sans', sans-serif;color:#000;text-align:right;letter-spacing:-0.408px;">Incl.Fl.PP</div>
<div class="b" style="left:1073px;top:154px;width:65px;height:18px;background:#D4D0C8;box-shadow:inset 1px 1px 0 #FFFFFF, inset -1px -1px 0 #404040, inset -2px -2px 0 #808080;"></div>
<div class="t" style="left:1073px;width:54px;overflow:hidden;top:156px;font:11px/14px 'Liberation Sans', sans-serif;color:#000;text-align:right;letter-spacing:-0.273px;">Basket</div>
<div class="b" style="left:1138px;top:154px;width:55px;height:18px;background:#D4D0C8;box-shadow:inset 1px 1px 0 #FFFFFF, inset -1px -1px 0 #404040, inset -2px -2px 0 #808080;"></div>
<div class="t" style="left:1138px;width:52px;overflow:hidden;top:156px;font:11px/14px 'Liberation Sans', sans-serif;color:#000;text-align:right;letter-spacing:-0.225px;">Discount</div>
<div class="b" style="left:1193px;top:154px;width:25px;height:18px;background:#D4D0C8;box-shadow:inset 1px 1px 0 #FFFFFF, inset -1px -1px 0 #404040, inset -2px -2px 0 #808080;"></div>
<div class="t" style="left:1192px;width:25px;top:156px;font:11px/14px 'Liberation Sans', sans-serif;color:#000;text-align:center;letter-spacing:-0.312px;">Of</div>
<div class="b" style="left:1218px;top:154px;width:60px;height:18px;background:#D4D0C8;box-shadow:inset 1px 1px 0 #FFFFFF, inset -1px -1px 0 #404040, inset -2px -2px 0 #808080;"></div>
<div class="t" style="left:1219px;width:58px;overflow:hidden;top:156px;font:11px/14px 'Liberation Sans', sans-serif;color:#000;letter-spacing:-0.072px;">Contract</div>
<div class="b" style="left:1278px;top:154px;width:75px;height:18px;background:#D4D0C8;box-shadow:inset 1px 1px 0 #FFFFFF, inset -1px -1px 0 #404040, inset -2px -2px 0 #808080;"></div>
<div class="t" style="left:1279px;width:73px;overflow:hidden;top:156px;font:11px/14px 'Liberation Sans', sans-serif;color:#000;letter-spacing:-0.183px;">Act. Supplier</div>
<div class="b" style="left:1353px;top:154px;width:220px;height:18px;background:#D4D0C8;box-shadow:inset 1px 1px 0 #FFFFFF, inset -1px -1px 0 #404040, inset -2px -2px 0 #808080;"></div>
<svg class="b" style="left:1127px;top:160px" width="8" height="4" viewBox="0 0 8 4"><path d="M0.5 0 L7.5 0 L4 4 Z" fill="#8C8C8C"/></svg>
<div class="b" style="left:220px;top:172px;width:1133px;height:585px;background:#BEDDFF"></div>
<div class="b" style="left:220px;top:186px;width:1352px;height:1px;background:#D4D0C8"></div>
<div class="b" style="left:220px;top:201px;width:1352px;height:1px;background:#D4D0C8"></div>
<div class="b" style="left:220px;top:216px;width:1352px;height:1px;background:#D4D0C8"></div>
<div class="b" style="left:220px;top:231px;width:1352px;height:1px;background:#D4D0C8"></div>
<div class="b" style="left:220px;top:246px;width:1352px;height:1px;background:#D4D0C8"></div>
<div class="b" style="left:220px;top:261px;width:1352px;height:1px;background:#D4D0C8"></div>
<div class="b" style="left:220px;top:276px;width:1352px;height:1px;background:#D4D0C8"></div>
<div class="b" style="left:220px;top:291px;width:1352px;height:1px;background:#D4D0C8"></div>
<div class="b" style="left:220px;top:306px;width:1352px;height:1px;background:#D4D0C8"></div>
<div class="b" style="left:220px;top:321px;width:1352px;height:1px;background:#D4D0C8"></div>
<div class="b" style="left:220px;top:336px;width:1352px;height:1px;background:#D4D0C8"></div>
<div class="b" style="left:220px;top:351px;width:1352px;height:1px;background:#D4D0C8"></div>
<div class="b" style="left:220px;top:366px;width:1352px;height:1px;background:#D4D0C8"></div>
<div class="b" style="left:220px;top:381px;width:1352px;height:1px;background:#D4D0C8"></div>
<div class="b" style="left:220px;top:396px;width:1352px;height:1px;background:#D4D0C8"></div>
<div class="b" style="left:220px;top:411px;width:1352px;height:1px;background:#D4D0C8"></div>
<div class="b" style="left:220px;top:426px;width:1352px;height:1px;background:#D4D0C8"></div>
<div class="b" style="left:220px;top:441px;width:1352px;height:1px;background:#D4D0C8"></div>
<div class="b" style="left:220px;top:456px;width:1352px;height:1px;background:#D4D0C8"></div>
<div class="b" style="left:220px;top:471px;width:1352px;height:1px;background:#D4D0C8"></div>
<div class="b" style="left:220px;top:486px;width:1352px;height:1px;background:#D4D0C8"></div>
<div class="b" style="left:220px;top:501px;width:1352px;height:1px;background:#D4D0C8"></div>
<div class="b" style="left:220px;top:516px;width:1352px;height:1px;background:#D4D0C8"></div>
<div class="b" style="left:220px;top:531px;width:1352px;height:1px;background:#D4D0C8"></div>
<div class="b" style="left:220px;top:546px;width:1352px;height:1px;background:#D4D0C8"></div>
<div class="b" style="left:220px;top:561px;width:1352px;height:1px;background:#D4D0C8"></div>
<div class="b" style="left:220px;top:576px;width:1352px;height:1px;background:#D4D0C8"></div>
<div class="b" style="left:220px;top:591px;width:1352px;height:1px;background:#D4D0C8"></div>
<div class="b" style="left:220px;top:606px;width:1352px;height:1px;background:#D4D0C8"></div>
<div class="b" style="left:220px;top:621px;width:1352px;height:1px;background:#D4D0C8"></div>
<div class="b" style="left:220px;top:636px;width:1352px;height:1px;background:#D4D0C8"></div>
<div class="b" style="left:220px;top:651px;width:1352px;height:1px;background:#D4D0C8"></div>
<div class="b" style="left:220px;top:666px;width:1352px;height:1px;background:#D4D0C8"></div>
<div class="b" style="left:220px;top:681px;width:1352px;height:1px;background:#D4D0C8"></div>
<div class="b" style="left:220px;top:696px;width:1352px;height:1px;background:#D4D0C8"></div>
<div class="b" style="left:220px;top:711px;width:1352px;height:1px;background:#D4D0C8"></div>
<div class="b" style="left:220px;top:726px;width:1352px;height:1px;background:#D4D0C8"></div>
<div class="b" style="left:220px;top:741px;width:1352px;height:1px;background:#D4D0C8"></div>
<div class="b" style="left:220px;top:756px;width:1352px;height:1px;background:#D4D0C8"></div>
<div class="b" style="left:294px;top:172px;width:1px;height:585px;background:#D4D0C8"></div>
<div class="b" style="left:414px;top:172px;width:1px;height:585px;background:#D4D0C8"></div>
<div class="b" style="left:454px;top:172px;width:1px;height:585px;background:#D4D0C8"></div>
<div class="b" style="left:529px;top:172px;width:1px;height:585px;background:#D4D0C8"></div>
<div class="b" style="left:619px;top:172px;width:1px;height:585px;background:#D4D0C8"></div>
<div class="b" style="left:654px;top:172px;width:1px;height:585px;background:#D4D0C8"></div>
<div class="b" style="left:722px;top:172px;width:1px;height:585px;background:#D4D0C8"></div>
<div class="b" style="left:757px;top:172px;width:1px;height:585px;background:#D4D0C8"></div>
<div class="b" style="left:825px;top:172px;width:1px;height:585px;background:#D4D0C8"></div>
<div class="b" style="left:887px;top:172px;width:1px;height:585px;background:#D4D0C8"></div>
<div class="b" style="left:912px;top:172px;width:1px;height:585px;background:#D4D0C8"></div>
<div class="b" style="left:937px;top:172px;width:1px;height:585px;background:#D4D0C8"></div>
<div class="b" style="left:962px;top:172px;width:1px;height:585px;background:#D4D0C8"></div>
<div class="b" style="left:1017px;top:172px;width:1px;height:585px;background:#D4D0C8"></div>
<div class="b" style="left:1072px;top:172px;width:1px;height:585px;background:#D4D0C8"></div>
<div class="b" style="left:1137px;top:172px;width:1px;height:585px;background:#D4D0C8"></div>
<div class="b" style="left:1192px;top:172px;width:1px;height:585px;background:#D4D0C8"></div>
<div class="b" style="left:1217px;top:172px;width:1px;height:585px;background:#D4D0C8"></div>
<div class="b" style="left:1277px;top:172px;width:1px;height:585px;background:#D4D0C8"></div>
<div class="b" style="left:1352px;top:172px;width:1px;height:585px;background:#D4D0C8"></div>
<div class="b" style="left:220px;top:412px;width:1352px;height:15px;background:#0A246A"></div>
<div class="t" style="left:221px;width:73px;overflow:hidden;top:172px;font:11px/14px 'Liberation Sans', sans-serif;color:#000;letter-spacing:0.183px;">Internation<span style="letter-spacing:1.94px">...</span></div>
<div class="t" style="left:296px;width:118px;overflow:hidden;top:172px;font:11px/14px 'Liberation Sans', sans-serif;color:#000;letter-spacing:-0.154px;">The Floridian Hotel &amp; <span style="letter-spacing:1.94px">...</span></div>
<div class="t" style="left:416px;width:38px;overflow:hidden;top:172px;font:11px/14px 'Liberation Sans', sans-serif;color:#000;letter-spacing:-0.099px;">3.5</div>
<div class="t" style="left:456px;width:73px;overflow:hidden;top:172px;font:11px/14px 'Liberation Sans', sans-serif;color:#000;letter-spacing:-0.266px;">Bed And Br<span style="letter-spacing:1.94px">...</span></div>
<div class="t" style="left:531px;width:88px;overflow:hidden;top:172px;font:11px/14px 'Liberation Sans', sans-serif;color:#000;letter-spacing:-0.157px;">Standard Room</div>
<div class="t" style="left:621px;width:33px;overflow:hidden;top:172px;font:11px/14px 'Liberation Sans', sans-serif;color:#000;letter-spacing:-0.141px;">Wed</div>
<div class="t" style="left:656px;width:66px;overflow:hidden;top:172px;font:11px/14px 'Liberation Sans', sans-serif;color:#000;letter-spacing:0.094px;">27/09/2017</div>
<div class="t" style="left:724px;width:33px;overflow:hidden;top:172px;font:11px/14px 'Liberation Sans', sans-serif;color:#000;letter-spacing:-0.323px;">Thu</div>
<div class="t" style="left:759px;width:66px;overflow:hidden;top:172px;font:11px/14px 'Liberation Sans', sans-serif;color:#000;letter-spacing:0.094px;">05/10/2017</div>
<div class="t" style="left:827px;width:60px;overflow:hidden;top:172px;font:11px/14px 'Liberation Sans', sans-serif;color:#000;letter-spacing:-0.402px;">Ocean B<span style="letter-spacing:1.94px">...</span></div>
<div class="t" style="left:963px;width:52px;overflow:hidden;top:172px;font:11px/14px 'Liberation Sans', sans-serif;color:#000;text-align:right;letter-spacing:-0.109px;">333.91</div>
<div class="t" style="left:1018px;width:52px;overflow:hidden;top:172px;font:11px/14px 'Liberation Sans', sans-serif;color:#000;text-align:right;letter-spacing:-0.106px;">83.48</div>
<div class="t" style="left:1073px;width:62px;overflow:hidden;top:172px;font:11px/14px 'Liberation Sans', sans-serif;color:#000;text-align:right;letter-spacing:-0.109px;">333.91</div>
<div class="t" style="left:1138px;width:52px;overflow:hidden;top:172px;font:11px/14px 'Liberation Sans', sans-serif;color:#000;text-align:right;letter-spacing:-0.105px;">0.00</div>
<div class="t" style="left:1219px;width:58px;overflow:hidden;top:172px;font:11px/14px 'Liberation Sans', sans-serif;color:#000;letter-spacing:-0.875px;">XML</div>
<div class="t" style="left:221px;width:73px;overflow:hidden;top:187px;font:11px/14px 'Liberation Sans', sans-serif;color:#000;letter-spacing:-0.422px;">Kissimmee</div>
<div class="t" style="left:296px;width:118px;overflow:hidden;top:187px;font:11px/14px 'Liberation Sans', sans-serif;color:#000;letter-spacing:-0.226px;">Red Lion Hotel Orlando</div>
<div class="t" style="left:416px;width:38px;overflow:hidden;top:187px;font:11px/14px 'Liberation Sans', sans-serif;color:#000;letter-spacing:-0.099px;">3.0</div>
<div class="t" style="left:456px;width:73px;overflow:hidden;top:187px;font:11px/14px 'Liberation Sans', sans-serif;color:#000;letter-spacing:-0.337px;">Room Only</div>
<div class="t" style="left:531px;width:88px;overflow:hidden;top:187px;font:11px/14px 'Liberation Sans', sans-serif;color:#000;letter-spacing:-0.277px;">Deluxe Queen</div>
<div class="t" style="left:621px;width:33px;overflow:hidden;top:187px;font:11px/14px 'Liberation Sans', sans-serif;color:#000;letter-spacing:-0.141px;">Wed</div>
<div class="t" style="left:656px;width:66px;overflow:hidden;top:187px;font:11px/14px 'Liberation Sans', sans-serif;color:#000;letter-spacing:0.094px;">27/09/2017</div>
<div class="t" style="left:724px;width:33px;overflow:hidden;top:187px;font:11px/14px 'Liberation Sans', sans-serif;color:#000;letter-spacing:-0.323px;">Thu</div>
<div class="t" style="left:759px;width:66px;overflow:hidden;top:187px;font:11px/14px 'Liberation Sans', sans-serif;color:#000;letter-spacing:0.094px;">05/10/2017</div>
<div class="t" style="left:827px;width:60px;overflow:hidden;top:187px;font:11px/14px 'Liberation Sans', sans-serif;color:#000;letter-spacing:-0.172px;">Get A Bed</div>
<div class="t" style="left:963px;width:52px;overflow:hidden;top:187px;font:11px/14px 'Liberation Sans', sans-serif;color:#000;text-align:right;letter-spacing:-0.109px;">336.95</div>
<div class="t" style="left:1018px;width:52px;overflow:hidden;top:187px;font:11px/14px 'Liberation Sans', sans-serif;color:#000;text-align:right;letter-spacing:-0.106px;">84.24</div>
<div class="t" style="left:1073px;width:62px;overflow:hidden;top:187px;font:11px/14px 'Liberation Sans', sans-serif;color:#000;text-align:right;letter-spacing:-0.109px;">336.95</div>
<div class="t" style="left:1138px;width:52px;overflow:hidden;top:187px;font:11px/14px 'Liberation Sans', sans-serif;color:#000;text-align:right;letter-spacing:-0.105px;">0.00</div>
<div class="t" style="left:1219px;width:58px;overflow:hidden;top:187px;font:11px/14px 'Liberation Sans', sans-serif;color:#000;letter-spacing:-0.875px;">XML</div>
<div class="t" style="left:221px;width:73px;overflow:hidden;top:202px;font:11px/14px 'Liberation Sans', sans-serif;color:#000;letter-spacing:-0.422px;">Kissimmee</div>
<div class="t" style="left:296px;width:118px;overflow:hidden;top:202px;font:11px/14px 'Liberation Sans', sans-serif;color:#000;letter-spacing:-0.039px;">Comfort Inn Maingate</div>
<div class="t" style="left:416px;width:38px;overflow:hidden;top:202px;font:11px/14px 'Liberation Sans', sans-serif;color:#000;letter-spacing:-0.099px;">2.0</div>
<div class="t" style="left:456px;width:73px;overflow:hidden;top:202px;font:11px/14px 'Liberation Sans', sans-serif;color:#000;letter-spacing:-0.126px;">Hot Breakfast</div>
<div class="t" style="left:531px;width:88px;overflow:hidden;top:202px;font:11px/14px 'Liberation Sans', sans-serif;color:#000;letter-spacing:-0.171px;">Double Standard</div>
<div class="t" style="left:621px;width:33px;overflow:hidden;top:202px;font:11px/14px 'Liberation Sans', sans-serif;color:#000;letter-spacing:-0.141px;">Wed</div>
<div class="t" style="left:656px;width:66px;overflow:hidden;top:202px;font:11px/14px 'Liberation Sans', sans-serif;color:#000;letter-spacing:0.094px;">27/09/2017</div>
<div class="t" style="left:724px;width:33px;overflow:hidden;top:202px;font:11px/14px 'Liberation Sans', sans-serif;color:#000;letter-spacing:-0.323px;">Thu</div>
<div class="t" style="left:759px;width:66px;overflow:hidden;top:202px;font:11px/14px 'Liberation Sans', sans-serif;color:#000;letter-spacing:0.094px;">05/10/2017</div>
<div class="t" style="left:827px;width:60px;overflow:hidden;top:202px;font:11px/14px 'Liberation Sans', sans-serif;color:#000;letter-spacing:-0.172px;">Get A Bed</div>
<div class="t" style="left:963px;width:52px;overflow:hidden;top:202px;font:11px/14px 'Liberation Sans', sans-serif;color:#000;text-align:right;letter-spacing:-0.109px;">340.06</div>
<div class="t" style="left:1018px;width:52px;overflow:hidden;top:202px;font:11px/14px 'Liberation Sans', sans-serif;color:#000;text-align:right;letter-spacing:-0.106px;">85.02</div>
<div class="t" style="left:1073px;width:62px;overflow:hidden;top:202px;font:11px/14px 'Liberation Sans', sans-serif;color:#000;text-align:right;letter-spacing:-0.109px;">340.06</div>
<div class="t" style="left:1138px;width:52px;overflow:hidden;top:202px;font:11px/14px 'Liberation Sans', sans-serif;color:#000;text-align:right;letter-spacing:-0.105px;">0.00</div>
<div class="t" style="left:1219px;width:58px;overflow:hidden;top:202px;font:11px/14px 'Liberation Sans', sans-serif;color:#000;letter-spacing:-0.875px;">XML</div>
<div class="t" style="left:221px;width:73px;overflow:hidden;top:217px;font:11px/14px 'Liberation Sans', sans-serif;color:#000;letter-spacing:-0.422px;">Kissimmee</div>
<div class="t" style="left:296px;width:118px;overflow:hidden;top:217px;font:11px/14px 'Liberation Sans', sans-serif;color:#000;letter-spacing:-0.209px;">Clarion Suites Maingate</div>
<div class="t" style="left:416px;width:38px;overflow:hidden;top:217px;font:11px/14px 'Liberation Sans', sans-serif;color:#000;letter-spacing:-0.099px;">2.0</div>
<div class="t" style="left:456px;width:73px;overflow:hidden;top:217px;font:11px/14px 'Liberation Sans', sans-serif;color:#000;letter-spacing:-0.337px;">Room Only</div>
<div class="t" style="left:531px;width:88px;overflow:hidden;top:217px;font:11px/14px 'Liberation Sans', sans-serif;color:#000;letter-spacing:-0.150px;">Suite Two Que<span style="letter-spacing:1.94px">...</span></div>
<div class="t" style="left:621px;width:33px;overflow:hidden;top:217px;font:11px/14px 'Liberation Sans', sans-serif;color:#000;letter-spacing:-0.141px;">Wed</div>
<div class="t" style="left:656px;width:66px;overflow:hidden;top:217px;font:11px/14px 'Liberation Sans', sans-serif;color:#000;letter-spacing:0.094px;">27/09/2017</div>
<div class="t" style="left:724px;width:33px;overflow:hidden;top:217px;font:11px/14px 'Liberation Sans', sans-serif;color:#000;letter-spacing:-0.323px;">Thu</div>
<div class="t" style="left:759px;width:66px;overflow:hidden;top:217px;font:11px/14px 'Liberation Sans', sans-serif;color:#000;letter-spacing:0.094px;">05/10/2017</div>
<div class="t" style="left:827px;width:60px;overflow:hidden;top:217px;font:11px/14px 'Liberation Sans', sans-serif;color:#000;letter-spacing:-0.172px;">Get A Bed</div>
<div class="t" style="left:963px;width:52px;overflow:hidden;top:217px;font:11px/14px 'Liberation Sans', sans-serif;color:#000;text-align:right;letter-spacing:-0.109px;">340.06</div>
<div class="t" style="left:1018px;width:52px;overflow:hidden;top:217px;font:11px/14px 'Liberation Sans', sans-serif;color:#000;text-align:right;letter-spacing:-0.106px;">85.02</div>
<div class="t" style="left:1073px;width:62px;overflow:hidden;top:217px;font:11px/14px 'Liberation Sans', sans-serif;color:#000;text-align:right;letter-spacing:-0.109px;">340.06</div>
<div class="t" style="left:1138px;width:52px;overflow:hidden;top:217px;font:11px/14px 'Liberation Sans', sans-serif;color:#000;text-align:right;letter-spacing:-0.105px;">0.00</div>
<div class="t" style="left:1219px;width:58px;overflow:hidden;top:217px;font:11px/14px 'Liberation Sans', sans-serif;color:#000;letter-spacing:-0.875px;">XML</div>
<div class="t" style="left:221px;width:73px;overflow:hidden;top:232px;font:11px/14px 'Liberation Sans', sans-serif;color:#000;letter-spacing:-0.422px;">Kissimmee</div>
<div class="t" style="left:296px;width:118px;overflow:hidden;top:232px;font:11px/14px 'Liberation Sans', sans-serif;color:#000;letter-spacing:-0.229px;">Seralago Hotel and S<span style="letter-spacing:1.94px">...</span></div>
<div class="t" style="left:416px;width:38px;overflow:hidden;top:232px;font:11px/14px 'Liberation Sans', sans-serif;color:#000;letter-spacing:-0.099px;">3.0</div>
<div class="t" style="left:456px;width:73px;overflow:hidden;top:232px;font:11px/14px 'Liberation Sans', sans-serif;color:#000;letter-spacing:-0.337px;">Room Only</div>
<div class="t" style="left:531px;width:88px;overflow:hidden;top:232px;font:11px/14px 'Liberation Sans', sans-serif;color:#000;letter-spacing:-0.157px;">Standard Room</div>
<div class="t" style="left:621px;width:33px;overflow:hidden;top:232px;font:11px/14px 'Liberation Sans', sans-serif;color:#000;letter-spacing:-0.141px;">Wed</div>
<div class="t" style="left:656px;width:66px;overflow:hidden;top:232px;font:11px/14px 'Liberation Sans', sans-serif;color:#000;letter-spacing:0.094px;">27/09/2017</div>
<div class="t" style="left:724px;width:33px;overflow:hidden;top:232px;font:11px/14px 'Liberation Sans', sans-serif;color:#000;letter-spacing:-0.323px;">Thu</div>
<div class="t" style="left:759px;width:66px;overflow:hidden;top:232px;font:11px/14px 'Liberation Sans', sans-serif;color:#000;letter-spacing:0.094px;">05/10/2017</div>
<div class="t" style="left:827px;width:60px;overflow:hidden;top:232px;font:11px/14px 'Liberation Sans', sans-serif;color:#000;letter-spacing:-0.172px;">Get A Bed</div>
<div class="t" style="left:887px;width:25px;top:232px;font:11px/14px 'Liberation Sans', sans-serif;color:#000;text-align:center;letter-spacing:1.719px;">*</div>
<div class="t" style="left:963px;width:52px;overflow:hidden;top:232px;font:11px/14px 'Liberation Sans', sans-serif;color:#000;text-align:right;letter-spacing:-0.109px;">340.74</div>
<div class="t" style="left:1018px;width:52px;overflow:hidden;top:232px;font:11px/14px 'Liberation Sans', sans-serif;color:#000;text-align:right;letter-spacing:-0.106px;">85.19</div>
<div class="t" style="left:1073px;width:62px;overflow:hidden;top:232px;font:11px/14px 'Liberation Sans', sans-serif;color:#000;text-align:right;letter-spacing:-0.109px;">340.74</div>
<div class="t" style="left:1138px;width:52px;overflow:hidden;top:232px;font:11px/14px 'Liberation Sans', sans-serif;color:#000;text-align:right;letter-spacing:-0.105px;">0.00</div>
<div class="t" style="left:1219px;width:58px;overflow:hidden;top:232px;font:11px/14px 'Liberation Sans', sans-serif;color:#000;letter-spacing:-0.875px;">XML</div>
<div class="t" style="left:221px;width:73px;overflow:hidden;top:247px;font:11px/14px 'Liberation Sans', sans-serif;color:#000;letter-spacing:0.053px;">Orlando Int<span style="letter-spacing:1.94px">...</span></div>
<div class="t" style="left:296px;width:118px;overflow:hidden;top:247px;font:11px/14px 'Liberation Sans', sans-serif;color:#000;letter-spacing:-0.241px;">Ramada Convention <span style="letter-spacing:1.94px">...</span></div>
<div class="t" style="left:416px;width:38px;overflow:hidden;top:247px;font:11px/14px 'Liberation Sans', sans-serif;color:#000;letter-spacing:-0.099px;">3.0</div>
<div class="t" style="left:456px;width:73px;overflow:hidden;top:247px;font:11px/14px 'Liberation Sans', sans-serif;color:#000;letter-spacing:-0.151px;">Continental<span style="letter-spacing:1.94px">...</span></div>
<div class="t" style="left:531px;width:88px;overflow:hidden;top:247px;font:11px/14px 'Liberation Sans', sans-serif;color:#000;letter-spacing:-0.138px;">Standard - 2 B<span style="letter-spacing:1.94px">...</span></div>
<div class="t" style="left:621px;width:33px;overflow:hidden;top:247px;font:11px/14px 'Liberation Sans', sans-serif;color:#000;letter-spacing:-0.141px;">Wed</div>
<div class="t" style="left:656px;width:66px;overflow:hidden;top:247px;font:11px/14px 'Liberation Sans', sans-serif;color:#000;letter-spacing:0.094px;">27/09/2017</div>
<div class="t" style="left:724px;width:33px;overflow:hidden;top:247px;font:11px/14px 'Liberation Sans', sans-serif;color:#000;letter-spacing:-0.323px;">Thu</div>
<div class="t" style="left:759px;width:66px;overflow:hidden;top:247px;font:11px/14px 'Liberation Sans', sans-serif;color:#000;letter-spacing:0.094px;">05/10/2017</div>
<div class="t" style="left:827px;width:60px;overflow:hidden;top:247px;font:11px/14px 'Liberation Sans', sans-serif;color:#000;letter-spacing:-0.172px;">Get A Bed</div>
<div class="t" style="left:887px;width:25px;top:247px;font:11px/14px 'Liberation Sans', sans-serif;color:#000;text-align:center;letter-spacing:1.719px;">*</div>
<div class="t" style="left:963px;width:52px;overflow:hidden;top:247px;font:11px/14px 'Liberation Sans', sans-serif;color:#000;text-align:right;letter-spacing:-0.109px;">342.78</div>
<div class="t" style="left:1018px;width:52px;overflow:hidden;top:247px;font:11px/14px 'Liberation Sans', sans-serif;color:#000;text-align:right;letter-spacing:-0.106px;">85.70</div>
<div class="t" style="left:1073px;width:62px;overflow:hidden;top:247px;font:11px/14px 'Liberation Sans', sans-serif;color:#000;text-align:right;letter-spacing:-0.109px;">342.78</div>
<div class="t" style="left:1138px;width:52px;overflow:hidden;top:247px;font:11px/14px 'Liberation Sans', sans-serif;color:#000;text-align:right;letter-spacing:-0.105px;">0.00</div>
<div class="t" style="left:1219px;width:58px;overflow:hidden;top:247px;font:11px/14px 'Liberation Sans', sans-serif;color:#000;letter-spacing:-0.875px;">XML</div>
<div class="t" style="left:221px;width:73px;overflow:hidden;top:262px;font:11px/14px 'Liberation Sans', sans-serif;color:#000;letter-spacing:-0.224px;">Florida Mall <span style="letter-spacing:1.94px">...</span></div>
<div class="t" style="left:296px;width:118px;overflow:hidden;top:262px;font:11px/14px 'Liberation Sans', sans-serif;color:#000;letter-spacing:-0.175px;">Rodeway Inn Near Fl<span style="letter-spacing:1.94px">...</span></div>
<div class="t" style="left:416px;width:38px;overflow:hidden;top:262px;font:11px/14px 'Liberation Sans', sans-serif;color:#000;letter-spacing:0.797px;">2*</div>
<div class="t" style="left:456px;width:73px;overflow:hidden;top:262px;font:11px/14px 'Liberation Sans', sans-serif;color:#000;letter-spacing:-0.316px;">Roomonly</div>
<div class="t" style="left:531px;width:88px;overflow:hidden;top:262px;font:11px/14px 'Liberation Sans', sans-serif;color:#000;letter-spacing:-0.171px;">Standard, 2 Be<span style="letter-spacing:1.94px">...</span></div>
<div class="t" style="left:621px;width:33px;overflow:hidden;top:262px;font:11px/14px 'Liberation Sans', sans-serif;color:#000;letter-spacing:-0.141px;">Wed</div>
<div class="t" style="left:656px;width:66px;overflow:hidden;top:262px;font:11px/14px 'Liberation Sans', sans-serif;color:#000;letter-spacing:0.094px;">27/09/2017</div>
<div class="t" style="left:724px;width:33px;overflow:hidden;top:262px;font:11px/14px 'Liberation Sans', sans-serif;color:#000;letter-spacing:-0.323px;">Thu</div>
<div class="t" style="left:759px;width:66px;overflow:hidden;top:262px;font:11px/14px 'Liberation Sans', sans-serif;color:#000;letter-spacing:0.094px;">05/10/2017</div>
<div class="t" style="left:827px;width:60px;overflow:hidden;top:262px;font:11px/14px 'Liberation Sans', sans-serif;color:#000;letter-spacing:-0.066px;">Tourico <span style="letter-spacing:1.94px">...</span></div>
<div class="t" style="left:963px;width:52px;overflow:hidden;top:262px;font:11px/14px 'Liberation Sans', sans-serif;color:#000;text-align:right;letter-spacing:-0.109px;">343.43</div>
<div class="t" style="left:1018px;width:52px;overflow:hidden;top:262px;font:11px/14px 'Liberation Sans', sans-serif;color:#000;text-align:right;letter-spacing:-0.106px;">85.86</div>
<div class="t" style="left:1073px;width:62px;overflow:hidden;top:262px;font:11px/14px 'Liberation Sans', sans-serif;color:#000;text-align:right;letter-spacing:-0.109px;">343.43</div>
<div class="t" style="left:1138px;width:52px;overflow:hidden;top:262px;font:11px/14px 'Liberation Sans', sans-serif;color:#000;text-align:right;letter-spacing:-0.105px;">0.00</div>
<div class="t" style="left:1219px;width:58px;overflow:hidden;top:262px;font:11px/14px 'Liberation Sans', sans-serif;color:#000;letter-spacing:-0.875px;">XML</div>
<div class="t" style="left:221px;width:73px;overflow:hidden;top:277px;font:11px/14px 'Liberation Sans', sans-serif;color:#000;letter-spacing:-0.315px;">Universal O<span style="letter-spacing:1.94px">...</span></div>
<div class="t" style="left:296px;width:118px;overflow:hidden;top:277px;font:11px/14px 'Liberation Sans', sans-serif;color:#000;letter-spacing:-0.205px;">Quality Suites</div>
<div class="t" style="left:416px;width:38px;overflow:hidden;top:277px;font:11px/14px 'Liberation Sans', sans-serif;color:#000;letter-spacing:-0.099px;">2.0</div>
<div class="t" style="left:456px;width:73px;overflow:hidden;top:277px;font:11px/14px 'Liberation Sans', sans-serif;color:#000;letter-spacing:-0.126px;">Hot Breakfast</div>
<div class="t" style="left:531px;width:88px;overflow:hidden;top:277px;font:11px/14px 'Liberation Sans', sans-serif;color:#000;letter-spacing:-0.230px;">Suite One Bedr<span style="letter-spacing:1.94px">...</span></div>
<div class="t" style="left:621px;width:33px;overflow:hidden;top:277px;font:11px/14px 'Liberation Sans', sans-serif;color:#000;letter-spacing:-0.141px;">Wed</div>
<div class="t" style="left:656px;width:66px;overflow:hidden;top:277px;font:11px/14px 'Liberation Sans', sans-serif;color:#000;letter-spacing:0.094px;">27/09/2017</div>
<div class="t" style="left:724px;width:33px;overflow:hidden;top:277px;font:11px/14px 'Liberation Sans', sans-serif;color:#000;letter-spacing:-0.323px;">Thu</div>
<div class="t" style="left:759px;width:66px;overflow:hidden;top:277px;font:11px/14px 'Liberation Sans', sans-serif;color:#000;letter-spacing:0.094px;">05/10/2017</div>
<div class="t" style="left:827px;width:60px;overflow:hidden;top:277px;font:11px/14px 'Liberation Sans', sans-serif;color:#000;letter-spacing:-0.172px;">Get A Bed</div>
<div class="t" style="left:963px;width:52px;overflow:hidden;top:277px;font:11px/14px 'Liberation Sans', sans-serif;color:#000;text-align:right;letter-spacing:-0.109px;">348.27</div>
<div class="t" style="left:1018px;width:52px;overflow:hidden;top:277px;font:11px/14px 'Liberation Sans', sans-serif;color:#000;text-align:right;letter-spacing:-0.106px;">87.07</div>
<div class="t" style="left:1073px;width:62px;overflow:hidden;top:277px;font:11px/14px 'Liberation Sans', sans-serif;color:#000;text-align:right;letter-spacing:-0.109px;">348.27</div>
<div class="t" style="left:1138px;width:52px;overflow:hidden;top:277px;font:11px/14px 'Liberation Sans', sans-serif;color:#000;text-align:right;letter-spacing:-0.105px;">0.00</div>
<div class="t" style="left:1219px;width:58px;overflow:hidden;top:277px;font:11px/14px 'Liberation Sans', sans-serif;color:#000;letter-spacing:-0.875px;">XML</div>
<div class="t" style="left:221px;width:73px;overflow:hidden;top:292px;font:11px/14px 'Liberation Sans', sans-serif;color:#000;letter-spacing:-0.315px;">Universal O<span style="letter-spacing:1.94px">...</span></div>
<div class="t" style="left:296px;width:118px;overflow:hidden;top:292px;font:11px/14px 'Liberation Sans', sans-serif;color:#000;letter-spacing:-0.191px;">Quality Suites Near <span style="letter-spacing:1.94px">...</span></div>
<div class="t" style="left:416px;width:38px;overflow:hidden;top:292px;font:11px/14px 'Liberation Sans', sans-serif;color:#000;letter-spacing:-0.099px;">2.0</div>
<div class="t" style="left:456px;width:73px;overflow:hidden;top:292px;font:11px/14px 'Liberation Sans', sans-serif;color:#000;letter-spacing:-0.151px;">Continental<span style="letter-spacing:1.94px">...</span></div>
<div class="t" style="left:531px;width:88px;overflow:hidden;top:292px;font:11px/14px 'Liberation Sans', sans-serif;color:#000;letter-spacing:-0.230px;">Suite One Bedr<span style="letter-spacing:1.94px">...</span></div>
<div class="t" style="left:621px;width:33px;overflow:hidden;top:292px;font:11px/14px 'Liberation Sans', sans-serif;color:#000;letter-spacing:-0.141px;">Wed</div>
<div class="t" style="left:656px;width:66px;overflow:hidden;top:292px;font:11px/14px 'Liberation Sans', sans-serif;color:#000;letter-spacing:0.094px;">27/09/2017</div>
<div class="t" style="left:724px;width:33px;overflow:hidden;top:292px;font:11px/14px 'Liberation Sans', sans-serif;color:#000;letter-spacing:-0.323px;">Thu</div>
<div class="t" style="left:759px;width:66px;overflow:hidden;top:292px;font:11px/14px 'Liberation Sans', sans-serif;color:#000;letter-spacing:0.094px;">05/10/2017</div>
<div class="t" style="left:827px;width:60px;overflow:hidden;top:292px;font:11px/14px 'Liberation Sans', sans-serif;color:#000;letter-spacing:-0.172px;">Get A Bed</div>
<div class="t" style="left:963px;width:52px;overflow:hidden;top:292px;font:11px/14px 'Liberation Sans', sans-serif;color:#000;text-align:right;letter-spacing:-0.109px;">348.27</div>
<div class="t" style="left:1018px;width:52px;overflow:hidden;top:292px;font:11px/14px 'Liberation Sans', sans-serif;color:#000;text-align:right;letter-spacing:-0.106px;">87.07</div>
<div class="t" style="left:1073px;width:62px;overflow:hidden;top:292px;font:11px/14px 'Liberation Sans', sans-serif;color:#000;text-align:right;letter-spacing:-0.109px;">348.27</div>
<div class="t" style="left:1138px;width:52px;overflow:hidden;top:292px;font:11px/14px 'Liberation Sans', sans-serif;color:#000;text-align:right;letter-spacing:-0.105px;">0.00</div>
<div class="t" style="left:1219px;width:58px;overflow:hidden;top:292px;font:11px/14px 'Liberation Sans', sans-serif;color:#000;letter-spacing:-0.875px;">XML</div>
<div class="t" style="left:221px;width:73px;overflow:hidden;top:307px;font:11px/14px 'Liberation Sans', sans-serif;color:#000;letter-spacing:-0.099px;">Maingate/Ki<span style="letter-spacing:1.94px">...</span></div>
<div class="t" style="left:296px;width:118px;overflow:hidden;top:307px;font:11px/14px 'Liberation Sans', sans-serif;color:#000;letter-spacing:-0.117px;">Holiday Inn Maingate<span style="letter-spacing:1.94px">...</span></div>
<div class="t" style="left:416px;width:38px;overflow:hidden;top:307px;font:11px/14px 'Liberation Sans', sans-serif;color:#000;letter-spacing:-0.099px;">3.0</div>
<div class="t" style="left:456px;width:73px;overflow:hidden;top:307px;font:11px/14px 'Liberation Sans', sans-serif;color:#000;letter-spacing:-0.337px;">Room Only</div>
<div class="t" style="left:531px;width:88px;overflow:hidden;top:307px;font:11px/14px 'Liberation Sans', sans-serif;color:#000;letter-spacing:-0.171px;">Double Standard</div>
<div class="t" style="left:621px;width:33px;overflow:hidden;top:307px;font:11px/14px 'Liberation Sans', sans-serif;color:#000;letter-spacing:-0.141px;">Wed</div>
<div class="t" style="left:656px;width:66px;overflow:hidden;top:307px;font:11px/14px 'Liberation Sans', sans-serif;color:#000;letter-spacing:0.094px;">27/09/2017</div>
<div class="t" style="left:724px;width:33px;overflow:hidden;top:307px;font:11px/14px 'Liberation Sans', sans-serif;color:#000;letter-spacing:-0.323px;">Thu</div>
<div class="t" style="left:759px;width:66px;overflow:hidden;top:307px;font:11px/14px 'Liberation Sans', sans-serif;color:#000;letter-spacing:0.094px;">05/10/2017</div>
<div class="t" style="left:827px;width:60px;overflow:hidden;top:307px;font:11px/14px 'Liberation Sans', sans-serif;color:#000;letter-spacing:-0.172px;">Get A Bed</div>
<div class="t" style="left:887px;width:25px;top:307px;font:11px/14px 'Liberation Sans', sans-serif;color:#000;text-align:center;letter-spacing:1.719px;">*</div>
<div class="t" style="left:963px;width:52px;overflow:hidden;top:307px;font:11px/14px 'Liberation Sans', sans-serif;color:#000;text-align:right;letter-spacing:-0.109px;">349.52</div>
<div class="t" style="left:1018px;width:52px;overflow:hidden;top:307px;font:11px/14px 'Liberation Sans', sans-serif;color:#000;text-align:right;letter-spacing:-0.106px;">87.38</div>
<div class="t" style="left:1073px;width:62px;overflow:hidden;top:307px;font:11px/14px 'Liberation Sans', sans-serif;color:#000;text-align:right;letter-spacing:-0.109px;">349.52</div>
<div class="t" style="left:1138px;width:52px;overflow:hidden;top:307px;font:11px/14px 'Liberation Sans', sans-serif;color:#000;text-align:right;letter-spacing:-0.105px;">0.00</div>
<div class="t" style="left:1219px;width:58px;overflow:hidden;top:307px;font:11px/14px 'Liberation Sans', sans-serif;color:#000;letter-spacing:-0.875px;">XML</div>
<div class="t" style="left:221px;width:73px;overflow:hidden;top:322px;font:11px/14px 'Liberation Sans', sans-serif;color:#000;letter-spacing:-0.422px;">Kissimmee</div>
<div class="t" style="left:296px;width:118px;overflow:hidden;top:322px;font:11px/14px 'Liberation Sans', sans-serif;color:#000;letter-spacing:-0.229px;">Seralago Hotel and S<span style="letter-spacing:1.94px">...</span></div>
<div class="t" style="left:416px;width:38px;overflow:hidden;top:322px;font:11px/14px 'Liberation Sans', sans-serif;color:#000;letter-spacing:-0.099px;">3.0</div>
<div class="t" style="left:456px;width:73px;overflow:hidden;top:322px;font:11px/14px 'Liberation Sans', sans-serif;color:#000;letter-spacing:-0.337px;">Room Only</div>
<div class="t" style="left:531px;width:88px;overflow:hidden;top:322px;font:11px/14px 'Liberation Sans', sans-serif;color:#000;letter-spacing:-0.233px;">Kidsuite Suite</div>
<div class="t" style="left:621px;width:33px;overflow:hidden;top:322px;font:11px/14px 'Liberation Sans', sans-serif;color:#000;letter-spacing:-0.141px;">Wed</div>
<div class="t" style="left:656px;width:66px;overflow:hidden;top:322px;font:11px/14px 'Liberation Sans', sans-serif;color:#000;letter-spacing:0.094px;">27/09/2017</div>
<div class="t" style="left:724px;width:33px;overflow:hidden;top:322px;font:11px/14px 'Liberation Sans', sans-serif;color:#000;letter-spacing:-0.323px;">Thu</div>
<div class="t" style="left:759px;width:66px;overflow:hidden;top:322px;font:11px/14px 'Liberation Sans', sans-serif;color:#000;letter-spacing:0.094px;">05/10/2017</div>
<div class="t" style="left:827px;width:60px;overflow:hidden;top:322px;font:11px/14px 'Liberation Sans', sans-serif;color:#000;letter-spacing:-0.172px;">Get A Bed</div>
<div class="t" style="left:887px;width:25px;top:322px;font:11px/14px 'Liberation Sans', sans-serif;color:#000;text-align:center;letter-spacing:1.719px;">*</div>
<div class="t" style="left:963px;width:52px;overflow:hidden;top:322px;font:11px/14px 'Liberation Sans', sans-serif;color:#000;text-align:right;letter-spacing:-0.109px;">352.10</div>
<div class="t" style="left:1018px;width:52px;overflow:hidden;top:322px;font:11px/14px 'Liberation Sans', sans-serif;color:#000;text-align:right;letter-spacing:-0.106px;">88.03</div>
<div class="t" style="left:1073px;width:62px;overflow:hidden;top:322px;font:11px/14px 'Liberation Sans', sans-serif;color:#000;text-align:right;letter-spacing:-0.109px;">352.10</div>
<div class="t" style="left:1138px;width:52px;overflow:hidden;top:322px;font:11px/14px 'Liberation Sans', sans-serif;color:#000;text-align:right;letter-spacing:-0.105px;">0.00</div>
<div class="t" style="left:1219px;width:58px;overflow:hidden;top:322px;font:11px/14px 'Liberation Sans', sans-serif;color:#000;letter-spacing:-0.875px;">XML</div>
<div class="t" style="left:221px;width:73px;overflow:hidden;top:337px;font:11px/14px 'Liberation Sans', sans-serif;color:#000;letter-spacing:-0.422px;">Kissimmee</div>
<div class="t" style="left:296px;width:118px;overflow:hidden;top:337px;font:11px/14px 'Liberation Sans', sans-serif;color:#000;letter-spacing:-0.164px;">Holiday Inn Orlando <span style="letter-spacing:1.94px">...</span></div>
<div class="t" style="left:416px;width:38px;overflow:hidden;top:337px;font:11px/14px 'Liberation Sans', sans-serif;color:#000;letter-spacing:0.355px;">3.5*</div>
<div class="t" style="left:456px;width:73px;overflow:hidden;top:337px;font:11px/14px 'Liberation Sans', sans-serif;color:#000;letter-spacing:-0.316px;">Roomonly</div>
<div class="t" style="left:531px;width:88px;overflow:hidden;top:337px;font:11px/14px 'Liberation Sans', sans-serif;color:#000;letter-spacing:-0.210px;">Standard, Leis<span style="letter-spacing:1.94px">...</span></div>
<div class="t" style="left:621px;width:33px;overflow:hidden;top:337px;font:11px/14px 'Liberation Sans', sans-serif;color:#000;letter-spacing:-0.141px;">Wed</div>
<div class="t" style="left:656px;width:66px;overflow:hidden;top:337px;font:11px/14px 'Liberation Sans', sans-serif;color:#000;letter-spacing:0.094px;">27/09/2017</div>
<div class="t" style="left:724px;width:33px;overflow:hidden;top:337px;font:11px/14px 'Liberation Sans', sans-serif;color:#000;letter-spacing:-0.323px;">Thu</div>
<div class="t" style="left:759px;width:66px;overflow:hidden;top:337px;font:11px/14px 'Liberation Sans', sans-serif;color:#000;letter-spacing:0.094px;">05/10/2017</div>
<div class="t" style="left:827px;width:60px;overflow:hidden;top:337px;font:11px/14px 'Liberation Sans', sans-serif;color:#000;letter-spacing:-0.066px;">Tourico <span style="letter-spacing:1.94px">...</span></div>
<div class="t" style="left:963px;width:52px;overflow:hidden;top:337px;font:11px/14px 'Liberation Sans', sans-serif;color:#000;text-align:right;letter-spacing:-0.109px;">356.09</div>
<div class="t" style="left:1018px;width:52px;overflow:hidden;top:337px;font:11px/14px 'Liberation Sans', sans-serif;color:#000;text-align:right;letter-spacing:-0.106px;">89.02</div>
<div class="t" style="left:1073px;width:62px;overflow:hidden;top:337px;font:11px/14px 'Liberation Sans', sans-serif;color:#000;text-align:right;letter-spacing:-0.109px;">356.09</div>
<div class="t" style="left:1138px;width:52px;overflow:hidden;top:337px;font:11px/14px 'Liberation Sans', sans-serif;color:#000;text-align:right;letter-spacing:-0.105px;">0.00</div>
<div class="t" style="left:1219px;width:58px;overflow:hidden;top:337px;font:11px/14px 'Liberation Sans', sans-serif;color:#000;letter-spacing:-0.875px;">XML</div>
<div class="t" style="left:221px;width:73px;overflow:hidden;top:352px;font:11px/14px 'Liberation Sans', sans-serif;color:#000;letter-spacing:-0.422px;">Kissimmee</div>
<div class="t" style="left:296px;width:118px;overflow:hidden;top:352px;font:11px/14px 'Liberation Sans', sans-serif;color:#000;letter-spacing:-0.164px;">Holiday Inn Orlando <span style="letter-spacing:1.94px">...</span></div>
<div class="t" style="left:416px;width:38px;overflow:hidden;top:352px;font:11px/14px 'Liberation Sans', sans-serif;color:#000;letter-spacing:0.355px;">3.5*</div>
<div class="t" style="left:456px;width:73px;overflow:hidden;top:352px;font:11px/14px 'Liberation Sans', sans-serif;color:#000;letter-spacing:-0.316px;">Roomonly</div>
<div class="t" style="left:531px;width:88px;overflow:hidden;top:352px;font:11px/14px 'Liberation Sans', sans-serif;color:#000;letter-spacing:-0.210px;">Standard, Leis<span style="letter-spacing:1.94px">...</span></div>
<div class="t" style="left:621px;width:33px;overflow:hidden;top:352px;font:11px/14px 'Liberation Sans', sans-serif;color:#000;letter-spacing:-0.141px;">Wed</div>
<div class="t" style="left:656px;width:66px;overflow:hidden;top:352px;font:11px/14px 'Liberation Sans', sans-serif;color:#000;letter-spacing:0.094px;">27/09/2017</div>
<div class="t" style="left:724px;width:33px;overflow:hidden;top:352px;font:11px/14px 'Liberation Sans', sans-serif;color:#000;letter-spacing:-0.323px;">Thu</div>
<div class="t" style="left:759px;width:66px;overflow:hidden;top:352px;font:11px/14px 'Liberation Sans', sans-serif;color:#000;letter-spacing:0.094px;">05/10/2017</div>
<div class="t" style="left:827px;width:60px;overflow:hidden;top:352px;font:11px/14px 'Liberation Sans', sans-serif;color:#000;letter-spacing:-0.066px;">Tourico <span style="letter-spacing:1.94px">...</span></div>
<div class="t" style="left:963px;width:52px;overflow:hidden;top:352px;font:11px/14px 'Liberation Sans', sans-serif;color:#000;text-align:right;letter-spacing:-0.109px;">356.09</div>
<div class="t" style="left:1018px;width:52px;overflow:hidden;top:352px;font:11px/14px 'Liberation Sans', sans-serif;color:#000;text-align:right;letter-spacing:-0.106px;">89.02</div>
<div class="t" style="left:1073px;width:62px;overflow:hidden;top:352px;font:11px/14px 'Liberation Sans', sans-serif;color:#000;text-align:right;letter-spacing:-0.109px;">356.09</div>
<div class="t" style="left:1138px;width:52px;overflow:hidden;top:352px;font:11px/14px 'Liberation Sans', sans-serif;color:#000;text-align:right;letter-spacing:-0.105px;">0.00</div>
<div class="t" style="left:1219px;width:58px;overflow:hidden;top:352px;font:11px/14px 'Liberation Sans', sans-serif;color:#000;letter-spacing:-0.875px;">XML</div>
<div class="t" style="left:221px;width:73px;overflow:hidden;top:367px;font:11px/14px 'Liberation Sans', sans-serif;color:#000;letter-spacing:0.183px;">Internation<span style="letter-spacing:1.94px">...</span></div>
<div class="t" style="left:296px;width:118px;overflow:hidden;top:367px;font:11px/14px 'Liberation Sans', sans-serif;color:#000;letter-spacing:-0.243px;">Ramada Plaza Resort<span style="letter-spacing:1.94px">...</span></div>
<div class="t" style="left:416px;width:38px;overflow:hidden;top:367px;font:11px/14px 'Liberation Sans', sans-serif;color:#000;letter-spacing:0.355px;">3.5*</div>
<div class="t" style="left:456px;width:73px;overflow:hidden;top:367px;font:11px/14px 'Liberation Sans', sans-serif;color:#000;letter-spacing:-0.151px;">Continental<span style="letter-spacing:1.94px">...</span></div>
<div class="t" style="left:531px;width:88px;overflow:hidden;top:367px;font:11px/14px 'Liberation Sans', sans-serif;color:#000;letter-spacing:-0.082px;">Standard</div>
<div class="t" style="left:621px;width:33px;overflow:hidden;top:367px;font:11px/14px 'Liberation Sans', sans-serif;color:#000;letter-spacing:-0.141px;">Wed</div>
<div class="t" style="left:656px;width:66px;overflow:hidden;top:367px;font:11px/14px 'Liberation Sans', sans-serif;color:#000;letter-spacing:0.094px;">27/09/2017</div>
<div class="t" style="left:724px;width:33px;overflow:hidden;top:367px;font:11px/14px 'Liberation Sans', sans-serif;color:#000;letter-spacing:-0.323px;">Thu</div>
<div class="t" style="left:759px;width:66px;overflow:hidden;top:367px;font:11px/14px 'Liberation Sans', sans-serif;color:#000;letter-spacing:0.094px;">05/10/2017</div>
<div class="t" style="left:827px;width:60px;overflow:hidden;top:367px;font:11px/14px 'Liberation Sans', sans-serif;color:#000;letter-spacing:-0.066px;">Tourico <span style="letter-spacing:1.94px">...</span></div>
<div class="t" style="left:963px;width:52px;overflow:hidden;top:367px;font:11px/14px 'Liberation Sans', sans-serif;color:#000;text-align:right;letter-spacing:-0.109px;">361.40</div>
<div class="t" style="left:1018px;width:52px;overflow:hidden;top:367px;font:11px/14px 'Liberation Sans', sans-serif;color:#000;text-align:right;letter-spacing:-0.106px;">90.35</div>
<div class="t" style="left:1073px;width:62px;overflow:hidden;top:367px;font:11px/14px 'Liberation Sans', sans-serif;color:#000;text-align:right;letter-spacing:-0.109px;">361.40</div>
<div class="t" style="left:1138px;width:52px;overflow:hidden;top:367px;font:11px/14px 'Liberation Sans', sans-serif;color:#000;text-align:right;letter-spacing:-0.105px;">0.00</div>
<div class="t" style="left:1219px;width:58px;overflow:hidden;top:367px;font:11px/14px 'Liberation Sans', sans-serif;color:#000;letter-spacing:-0.875px;">XML</div>
<div class="t" style="left:221px;width:73px;overflow:hidden;top:382px;font:11px/14px 'Liberation Sans', sans-serif;color:#000;letter-spacing:0.183px;">Internation<span style="letter-spacing:1.94px">...</span></div>
<div class="t" style="left:296px;width:118px;overflow:hidden;top:382px;font:11px/14px 'Liberation Sans', sans-serif;color:#000;letter-spacing:0.046px;">Rosen Inn Internatio<span style="letter-spacing:1.94px">...</span></div>
<div class="t" style="left:416px;width:38px;overflow:hidden;top:382px;font:11px/14px 'Liberation Sans', sans-serif;color:#000;letter-spacing:-0.099px;">3.0</div>
<div class="t" style="left:456px;width:73px;overflow:hidden;top:382px;font:11px/14px 'Liberation Sans', sans-serif;color:#000;letter-spacing:-0.337px;">Room Only</div>
<div class="t" style="left:531px;width:88px;overflow:hidden;top:382px;font:11px/14px 'Liberation Sans', sans-serif;color:#000;letter-spacing:-0.157px;">Standard Room</div>
<div class="t" style="left:621px;width:33px;overflow:hidden;top:382px;font:11px/14px 'Liberation Sans', sans-serif;color:#000;letter-spacing:-0.141px;">Wed</div>
<div class="t" style="left:656px;width:66px;overflow:hidden;top:382px;font:11px/14px 'Liberation Sans', sans-serif;color:#000;letter-spacing:0.094px;">27/09/2017</div>
<div class="t" style="left:724px;width:33px;overflow:hidden;top:382px;font:11px/14px 'Liberation Sans', sans-serif;color:#000;letter-spacing:-0.323px;">Thu</div>
<div class="t" style="left:759px;width:66px;overflow:hidden;top:382px;font:11px/14px 'Liberation Sans', sans-serif;color:#000;letter-spacing:0.094px;">05/10/2017</div>
<div class="t" style="left:827px;width:60px;overflow:hidden;top:382px;font:11px/14px 'Liberation Sans', sans-serif;color:#000;letter-spacing:-0.402px;">Ocean B<span style="letter-spacing:1.94px">...</span></div>
<div class="t" style="left:963px;width:52px;overflow:hidden;top:382px;font:11px/14px 'Liberation Sans', sans-serif;color:#000;text-align:right;letter-spacing:-0.109px;">361.74</div>
<div class="t" style="left:1018px;width:52px;overflow:hidden;top:382px;font:11px/14px 'Liberation Sans', sans-serif;color:#000;text-align:right;letter-spacing:-0.106px;">90.44</div>
<div class="t" style="left:1073px;width:62px;overflow:hidden;top:382px;font:11px/14px 'Liberation Sans', sans-serif;color:#000;text-align:right;letter-spacing:-0.109px;">361.74</div>
<div class="t" style="left:1138px;width:52px;overflow:hidden;top:382px;font:11px/14px 'Liberation Sans', sans-serif;color:#000;text-align:right;letter-spacing:-0.105px;">0.00</div>
<div class="t" style="left:1219px;width:58px;overflow:hidden;top:382px;font:11px/14px 'Liberation Sans', sans-serif;color:#000;letter-spacing:-0.875px;">XML</div>
<div class="t" style="left:221px;width:73px;overflow:hidden;top:397px;font:11px/14px 'Liberation Sans', sans-serif;color:#000;letter-spacing:0.183px;">Internation<span style="letter-spacing:1.94px">...</span></div>
<div class="t" style="left:296px;width:118px;overflow:hidden;top:397px;font:11px/14px 'Liberation Sans', sans-serif;color:#000;letter-spacing:-0.156px;">Rosen Inn Closest to<span style="letter-spacing:1.94px">...</span></div>
<div class="t" style="left:416px;width:38px;overflow:hidden;top:397px;font:11px/14px 'Liberation Sans', sans-serif;color:#000;letter-spacing:-0.099px;">3.5</div>
<div class="t" style="left:456px;width:73px;overflow:hidden;top:397px;font:11px/14px 'Liberation Sans', sans-serif;color:#000;letter-spacing:-0.337px;">Room Only</div>
<div class="t" style="left:531px;width:88px;overflow:hidden;top:397px;font:11px/14px 'Liberation Sans', sans-serif;color:#000;letter-spacing:-0.157px;">Standard Room</div>
<div class="t" style="left:621px;width:33px;overflow:hidden;top:397px;font:11px/14px 'Liberation Sans', sans-serif;color:#000;letter-spacing:-0.141px;">Wed</div>
<div class="t" style="left:656px;width:66px;overflow:hidden;top:397px;font:11px/14px 'Liberation Sans', sans-serif;color:#000;letter-spacing:0.094px;">27/09/2017</div>
<div class="t" style="left:724px;width:33px;overflow:hidden;top:397px;font:11px/14px 'Liberation Sans', sans-serif;color:#000;letter-spacing:-0.323px;">Thu</div>
<div class="t" style="left:759px;width:66px;overflow:hidden;top:397px;font:11px/14px 'Liberation Sans', sans-serif;color:#000;letter-spacing:0.094px;">05/10/2017</div>
<div class="t" style="left:827px;width:60px;overflow:hidden;top:397px;font:11px/14px 'Liberation Sans', sans-serif;color:#000;letter-spacing:-0.402px;">Ocean B<span style="letter-spacing:1.94px">...</span></div>
<div class="t" style="left:963px;width:52px;overflow:hidden;top:397px;font:11px/14px 'Liberation Sans', sans-serif;color:#000;text-align:right;letter-spacing:-0.109px;">361.74</div>
<div class="t" style="left:1018px;width:52px;overflow:hidden;top:397px;font:11px/14px 'Liberation Sans', sans-serif;color:#000;text-align:right;letter-spacing:-0.106px;">90.44</div>
<div class="t" style="left:1073px;width:62px;overflow:hidden;top:397px;font:11px/14px 'Liberation Sans', sans-serif;color:#000;text-align:right;letter-spacing:-0.109px;">361.74</div>
<div class="t" style="left:1138px;width:52px;overflow:hidden;top:397px;font:11px/14px 'Liberation Sans', sans-serif;color:#000;text-align:right;letter-spacing:-0.105px;">0.00</div>
<div class="t" style="left:1219px;width:58px;overflow:hidden;top:397px;font:11px/14px 'Liberation Sans', sans-serif;color:#000;letter-spacing:-0.875px;">XML</div>
<div class="t" style="left:221px;width:73px;overflow:hidden;top:412px;font:11px/14px 'Liberation Sans', sans-serif;color:#fff;letter-spacing:0.183px;">Internation<span style="letter-spacing:1.94px">...</span></div>
<div class="t" style="left:296px;width:118px;overflow:hidden;top:412px;font:11px/14px 'Liberation Sans', sans-serif;color:#fff;letter-spacing:-0.065px;">Rosen Inn At Pointe <span style="letter-spacing:1.94px">...</span></div>
<div class="t" style="left:416px;width:38px;overflow:hidden;top:412px;font:11px/14px 'Liberation Sans', sans-serif;color:#fff;letter-spacing:-0.099px;">3.0</div>
<div class="t" style="left:456px;width:73px;overflow:hidden;top:412px;font:11px/14px 'Liberation Sans', sans-serif;color:#fff;letter-spacing:-0.337px;">Room Only</div>
<div class="t" style="left:531px;width:88px;overflow:hidden;top:412px;font:11px/14px 'Liberation Sans', sans-serif;color:#fff;letter-spacing:-0.157px;">Standard Room</div>
<div class="t" style="left:621px;width:33px;overflow:hidden;top:412px;font:11px/14px 'Liberation Sans', sans-serif;color:#fff;letter-spacing:-0.141px;">Wed</div>
<div class="t" style="left:656px;width:66px;overflow:hidden;top:412px;font:11px/14px 'Liberation Sans', sans-serif;color:#fff;letter-spacing:0.094px;">27/09/2017</div>
<div class="t" style="left:724px;width:33px;overflow:hidden;top:412px;font:11px/14px 'Liberation Sans', sans-serif;color:#fff;letter-spacing:-0.323px;">Thu</div>
<div class="t" style="left:759px;width:66px;overflow:hidden;top:412px;font:11px/14px 'Liberation Sans', sans-serif;color:#fff;letter-spacing:0.094px;">05/10/2017</div>
<div class="t" style="left:827px;width:60px;overflow:hidden;top:412px;font:11px/14px 'Liberation Sans', sans-serif;color:#fff;letter-spacing:-0.402px;">Ocean B<span style="letter-spacing:1.94px">...</span></div>
<div class="t" style="left:963px;width:52px;overflow:hidden;top:412px;font:11px/14px 'Liberation Sans', sans-serif;color:#fff;text-align:right;letter-spacing:-0.109px;">361.74</div>
<div class="t" style="left:1018px;width:52px;overflow:hidden;top:412px;font:11px/14px 'Liberation Sans', sans-serif;color:#fff;text-align:right;letter-spacing:-0.106px;">90.44</div>
<div class="t" style="left:1073px;width:62px;overflow:hidden;top:412px;font:11px/14px 'Liberation Sans', sans-serif;color:#fff;text-align:right;letter-spacing:-0.109px;">361.74</div>
<div class="t" style="left:1138px;width:52px;overflow:hidden;top:412px;font:11px/14px 'Liberation Sans', sans-serif;color:#fff;text-align:right;letter-spacing:-0.105px;">0.00</div>
<div class="t" style="left:1219px;width:58px;overflow:hidden;top:412px;font:11px/14px 'Liberation Sans', sans-serif;color:#fff;letter-spacing:-0.875px;">XML</div>
<div class="t" style="left:221px;width:73px;overflow:hidden;top:427px;font:11px/14px 'Liberation Sans', sans-serif;color:#000;letter-spacing:-0.372px;">Lake Buena<span style="letter-spacing:1.94px">...</span></div>
<div class="t" style="left:296px;width:118px;overflow:hidden;top:427px;font:11px/14px 'Liberation Sans', sans-serif;color:#000;letter-spacing:-0.287px;">Clarion Inn Lake Bue<span style="letter-spacing:1.94px">...</span></div>
<div class="t" style="left:416px;width:38px;overflow:hidden;top:427px;font:11px/14px 'Liberation Sans', sans-serif;color:#000;letter-spacing:-0.099px;">3.0</div>
<div class="t" style="left:456px;width:73px;overflow:hidden;top:427px;font:11px/14px 'Liberation Sans', sans-serif;color:#000;letter-spacing:-0.337px;">Room Only</div>
<div class="t" style="left:531px;width:88px;overflow:hidden;top:427px;font:11px/14px 'Liberation Sans', sans-serif;color:#000;letter-spacing:-0.157px;">Standard Room</div>
<div class="t" style="left:621px;width:33px;overflow:hidden;top:427px;font:11px/14px 'Liberation Sans', sans-serif;color:#000;letter-spacing:-0.141px;">Wed</div>
<div class="t" style="left:656px;width:66px;overflow:hidden;top:427px;font:11px/14px 'Liberation Sans', sans-serif;color:#000;letter-spacing:0.094px;">27/09/2017</div>
<div class="t" style="left:724px;width:33px;overflow:hidden;top:427px;font:11px/14px 'Liberation Sans', sans-serif;color:#000;letter-spacing:-0.323px;">Thu</div>
<div class="t" style="left:759px;width:66px;overflow:hidden;top:427px;font:11px/14px 'Liberation Sans', sans-serif;color:#000;letter-spacing:0.094px;">05/10/2017</div>
<div class="t" style="left:827px;width:60px;overflow:hidden;top:427px;font:11px/14px 'Liberation Sans', sans-serif;color:#000;letter-spacing:-0.402px;">Ocean B<span style="letter-spacing:1.94px">...</span></div>
<div class="t" style="left:963px;width:52px;overflow:hidden;top:427px;font:11px/14px 'Liberation Sans', sans-serif;color:#000;text-align:right;letter-spacing:-0.109px;">361.74</div>
<div class="t" style="left:1018px;width:52px;overflow:hidden;top:427px;font:11px/14px 'Liberation Sans', sans-serif;color:#000;text-align:right;letter-spacing:-0.106px;">90.44</div>
<div class="t" style="left:1073px;width:62px;overflow:hidden;top:427px;font:11px/14px 'Liberation Sans', sans-serif;color:#000;text-align:right;letter-spacing:-0.109px;">361.74</div>
<div class="t" style="left:1138px;width:52px;overflow:hidden;top:427px;font:11px/14px 'Liberation Sans', sans-serif;color:#000;text-align:right;letter-spacing:-0.105px;">0.00</div>
<div class="t" style="left:1219px;width:58px;overflow:hidden;top:427px;font:11px/14px 'Liberation Sans', sans-serif;color:#000;letter-spacing:-0.875px;">XML</div>
<div class="t" style="left:221px;width:73px;overflow:hidden;top:442px;font:11px/14px 'Liberation Sans', sans-serif;color:#000;letter-spacing:-0.422px;">Kissimmee</div>
<div class="t" style="left:296px;width:118px;overflow:hidden;top:442px;font:11px/14px 'Liberation Sans', sans-serif;color:#000;letter-spacing:-0.273px;">Crown Club Inn</div>
<div class="t" style="left:416px;width:38px;overflow:hidden;top:442px;font:11px/14px 'Liberation Sans', sans-serif;color:#000;letter-spacing:-0.099px;">3.0</div>
<div class="t" style="left:456px;width:73px;overflow:hidden;top:442px;font:11px/14px 'Liberation Sans', sans-serif;color:#000;letter-spacing:-0.126px;">Hot Breakfast</div>
<div class="t" style="left:531px;width:88px;overflow:hidden;top:442px;font:11px/14px 'Liberation Sans', sans-serif;color:#000;letter-spacing:-0.320px;">Double Deluxe</div>
<div class="t" style="left:621px;width:33px;overflow:hidden;top:442px;font:11px/14px 'Liberation Sans', sans-serif;color:#000;letter-spacing:-0.141px;">Wed</div>
<div class="t" style="left:656px;width:66px;overflow:hidden;top:442px;font:11px/14px 'Liberation Sans', sans-serif;color:#000;letter-spacing:0.094px;">27/09/2017</div>
<div class="t" style="left:724px;width:33px;overflow:hidden;top:442px;font:11px/14px 'Liberation Sans', sans-serif;color:#000;letter-spacing:-0.323px;">Thu</div>
<div class="t" style="left:759px;width:66px;overflow:hidden;top:442px;font:11px/14px 'Liberation Sans', sans-serif;color:#000;letter-spacing:0.094px;">05/10/2017</div>
<div class="t" style="left:827px;width:60px;overflow:hidden;top:442px;font:11px/14px 'Liberation Sans', sans-serif;color:#000;letter-spacing:-0.172px;">Get A Bed</div>
<div class="t" style="left:963px;width:52px;overflow:hidden;top:442px;font:11px/14px 'Liberation Sans', sans-serif;color:#000;text-align:right;letter-spacing:-0.109px;">362.81</div>
<div class="t" style="left:1018px;width:52px;overflow:hidden;top:442px;font:11px/14px 'Liberation Sans', sans-serif;color:#000;text-align:right;letter-spacing:-0.106px;">90.70</div>
<div class="t" style="left:1073px;width:62px;overflow:hidden;top:442px;font:11px/14px 'Liberation Sans', sans-serif;color:#000;text-align:right;letter-spacing:-0.109px;">362.81</div>
<div class="t" style="left:1138px;width:52px;overflow:hidden;top:442px;font:11px/14px 'Liberation Sans', sans-serif;color:#000;text-align:right;letter-spacing:-0.105px;">0.00</div>
<div class="t" style="left:1219px;width:58px;overflow:hidden;top:442px;font:11px/14px 'Liberation Sans', sans-serif;color:#000;letter-spacing:-0.875px;">XML</div>
<div class="t" style="left:221px;width:73px;overflow:hidden;top:457px;font:11px/14px 'Liberation Sans', sans-serif;color:#000;letter-spacing:-0.197px;">Orlando (FL)</div>
<div class="t" style="left:296px;width:118px;overflow:hidden;top:457px;font:11px/14px 'Liberation Sans', sans-serif;color:#000;letter-spacing:-0.175px;">Rodeway Inn Near Fl<span style="letter-spacing:1.94px">...</span></div>
<div class="t" style="left:416px;width:38px;overflow:hidden;top:457px;font:11px/14px 'Liberation Sans', sans-serif;color:#000;letter-spacing:-0.099px;">2.0</div>
<div class="t" style="left:456px;width:73px;overflow:hidden;top:457px;font:11px/14px 'Liberation Sans', sans-serif;color:#000;letter-spacing:-0.337px;">Room Only</div>
<div class="t" style="left:531px;width:88px;overflow:hidden;top:457px;font:11px/14px 'Liberation Sans', sans-serif;color:#000;letter-spacing:-0.126px;">2 Bedroom - 2 <span style="letter-spacing:1.94px">...</span></div>
<div class="t" style="left:621px;width:33px;overflow:hidden;top:457px;font:11px/14px 'Liberation Sans', sans-serif;color:#000;letter-spacing:-0.141px;">Wed</div>
<div class="t" style="left:656px;width:66px;overflow:hidden;top:457px;font:11px/14px 'Liberation Sans', sans-serif;color:#000;letter-spacing:0.094px;">27/09/2017</div>
<div class="t" style="left:724px;width:33px;overflow:hidden;top:457px;font:11px/14px 'Liberation Sans', sans-serif;color:#000;letter-spacing:-0.323px;">Thu</div>
<div class="t" style="left:759px;width:66px;overflow:hidden;top:457px;font:11px/14px 'Liberation Sans', sans-serif;color:#000;letter-spacing:0.094px;">05/10/2017</div>
<div class="t" style="left:827px;width:60px;overflow:hidden;top:457px;font:11px/14px 'Liberation Sans', sans-serif;color:#000;letter-spacing:-0.172px;">Get A Bed</div>
<div class="t" style="left:963px;width:52px;overflow:hidden;top:457px;font:11px/14px 'Liberation Sans', sans-serif;color:#000;text-align:right;letter-spacing:-0.109px;">364.29</div>
<div class="t" style="left:1018px;width:52px;overflow:hidden;top:457px;font:11px/14px 'Liberation Sans', sans-serif;color:#000;text-align:right;letter-spacing:-0.106px;">91.07</div>
<div class="t" style="left:1073px;width:62px;overflow:hidden;top:457px;font:11px/14px 'Liberation Sans', sans-serif;color:#000;text-align:right;letter-spacing:-0.109px;">364.29</div>
<div class="t" style="left:1138px;width:52px;overflow:hidden;top:457px;font:11px/14px 'Liberation Sans', sans-serif;color:#000;text-align:right;letter-spacing:-0.105px;">0.00</div>
<div class="t" style="left:1219px;width:58px;overflow:hidden;top:457px;font:11px/14px 'Liberation Sans', sans-serif;color:#000;letter-spacing:-0.875px;">XML</div>
<div class="t" style="left:221px;width:73px;overflow:hidden;top:472px;font:11px/14px 'Liberation Sans', sans-serif;color:#000;letter-spacing:-0.422px;">Kissimmee</div>
<div class="t" style="left:296px;width:118px;overflow:hidden;top:472px;font:11px/14px 'Liberation Sans', sans-serif;color:#000;letter-spacing:-0.218px;">Ramada Gateway</div>
<div class="t" style="left:416px;width:38px;overflow:hidden;top:472px;font:11px/14px 'Liberation Sans', sans-serif;color:#000;letter-spacing:0.797px;">3*</div>
<div class="t" style="left:456px;width:73px;overflow:hidden;top:472px;font:11px/14px 'Liberation Sans', sans-serif;color:#000;letter-spacing:-0.316px;">Roomonly</div>
<div class="t" style="left:531px;width:88px;overflow:hidden;top:472px;font:11px/14px 'Liberation Sans', sans-serif;color:#000;letter-spacing:-0.010px;">Standard, Tow<span style="letter-spacing:1.94px">...</span></div>
<div class="t" style="left:621px;width:33px;overflow:hidden;top:472px;font:11px/14px 'Liberation Sans', sans-serif;color:#000;letter-spacing:-0.141px;">Wed</div>
<div class="t" style="left:656px;width:66px;overflow:hidden;top:472px;font:11px/14px 'Liberation Sans', sans-serif;color:#000;letter-spacing:0.094px;">27/09/2017</div>
<div class="t" style="left:724px;width:33px;overflow:hidden;top:472px;font:11px/14px 'Liberation Sans', sans-serif;color:#000;letter-spacing:-0.323px;">Thu</div>
<div class="t" style="left:759px;width:66px;overflow:hidden;top:472px;font:11px/14px 'Liberation Sans', sans-serif;color:#000;letter-spacing:0.094px;">05/10/2017</div>
<div class="t" style="left:827px;width:60px;overflow:hidden;top:472px;font:11px/14px 'Liberation Sans', sans-serif;color:#000;letter-spacing:-0.066px;">Tourico <span style="letter-spacing:1.94px">...</span></div>
<div class="t" style="left:963px;width:52px;overflow:hidden;top:472px;font:11px/14px 'Liberation Sans', sans-serif;color:#000;text-align:right;letter-spacing:-0.109px;">375.23</div>
<div class="t" style="left:1018px;width:52px;overflow:hidden;top:472px;font:11px/14px 'Liberation Sans', sans-serif;color:#000;text-align:right;letter-spacing:-0.106px;">93.81</div>
<div class="t" style="left:1073px;width:62px;overflow:hidden;top:472px;font:11px/14px 'Liberation Sans', sans-serif;color:#000;text-align:right;letter-spacing:-0.109px;">375.23</div>
<div class="t" style="left:1138px;width:52px;overflow:hidden;top:472px;font:11px/14px 'Liberation Sans', sans-serif;color:#000;text-align:right;letter-spacing:-0.105px;">0.00</div>
<div class="t" style="left:1219px;width:58px;overflow:hidden;top:472px;font:11px/14px 'Liberation Sans', sans-serif;color:#000;letter-spacing:-0.875px;">XML</div>
<div class="t" style="left:221px;width:73px;overflow:hidden;top:487px;font:11px/14px 'Liberation Sans', sans-serif;color:#000;letter-spacing:0.053px;">Orlando Int<span style="letter-spacing:1.94px">...</span></div>
<div class="t" style="left:296px;width:118px;overflow:hidden;top:487px;font:11px/14px 'Liberation Sans', sans-serif;color:#000;letter-spacing:-0.243px;">Ramada Plaza Resort<span style="letter-spacing:1.94px">...</span></div>
<div class="t" style="left:416px;width:38px;overflow:hidden;top:487px;font:11px/14px 'Liberation Sans', sans-serif;color:#000;letter-spacing:-0.099px;">2.0</div>
<div class="t" style="left:456px;width:73px;overflow:hidden;top:487px;font:11px/14px 'Liberation Sans', sans-serif;color:#000;letter-spacing:-0.151px;">Continental<span style="letter-spacing:1.94px">...</span></div>
<div class="t" style="left:531px;width:88px;overflow:hidden;top:487px;font:11px/14px 'Liberation Sans', sans-serif;color:#000;letter-spacing:-0.171px;">Double Standard</div>
<div class="t" style="left:621px;width:33px;overflow:hidden;top:487px;font:11px/14px 'Liberation Sans', sans-serif;color:#000;letter-spacing:-0.141px;">Wed</div>
<div class="t" style="left:656px;width:66px;overflow:hidden;top:487px;font:11px/14px 'Liberation Sans', sans-serif;color:#000;letter-spacing:0.094px;">27/09/2017</div>
<div class="t" style="left:724px;width:33px;overflow:hidden;top:487px;font:11px/14px 'Liberation Sans', sans-serif;color:#000;letter-spacing:-0.323px;">Thu</div>
<div class="t" style="left:759px;width:66px;overflow:hidden;top:487px;font:11px/14px 'Liberation Sans', sans-serif;color:#000;letter-spacing:0.094px;">05/10/2017</div>
<div class="t" style="left:827px;width:60px;overflow:hidden;top:487px;font:11px/14px 'Liberation Sans', sans-serif;color:#000;letter-spacing:-0.172px;">Get A Bed</div>
<div class="t" style="left:963px;width:52px;overflow:hidden;top:487px;font:11px/14px 'Liberation Sans', sans-serif;color:#000;text-align:right;letter-spacing:-0.109px;">377.78</div>
<div class="t" style="left:1018px;width:52px;overflow:hidden;top:487px;font:11px/14px 'Liberation Sans', sans-serif;color:#000;text-align:right;letter-spacing:-0.106px;">94.45</div>
<div class="t" style="left:1073px;width:62px;overflow:hidden;top:487px;font:11px/14px 'Liberation Sans', sans-serif;color:#000;text-align:right;letter-spacing:-0.109px;">377.78</div>
<div class="t" style="left:1138px;width:52px;overflow:hidden;top:487px;font:11px/14px 'Liberation Sans', sans-serif;color:#000;text-align:right;letter-spacing:-0.105px;">0.00</div>
<div class="t" style="left:1219px;width:58px;overflow:hidden;top:487px;font:11px/14px 'Liberation Sans', sans-serif;color:#000;letter-spacing:-0.875px;">XML</div>
<div class="t" style="left:221px;width:73px;overflow:hidden;top:502px;font:11px/14px 'Liberation Sans', sans-serif;color:#000;letter-spacing:0.183px;">Internation<span style="letter-spacing:1.94px">...</span></div>
<div class="t" style="left:296px;width:118px;overflow:hidden;top:502px;font:11px/14px 'Liberation Sans', sans-serif;color:#000;letter-spacing:-0.243px;">Ramada Plaza Resort<span style="letter-spacing:1.94px">...</span></div>
<div class="t" style="left:416px;width:38px;overflow:hidden;top:502px;font:11px/14px 'Liberation Sans', sans-serif;color:#000;letter-spacing:0.355px;">3.5*</div>
<div class="t" style="left:456px;width:73px;overflow:hidden;top:502px;font:11px/14px 'Liberation Sans', sans-serif;color:#000;letter-spacing:-0.151px;">Continental<span style="letter-spacing:1.94px">...</span></div>
<div class="t" style="left:531px;width:88px;overflow:hidden;top:502px;font:11px/14px 'Liberation Sans', sans-serif;color:#000;letter-spacing:-0.171px;">Standard, High<span style="letter-spacing:1.94px">...</span></div>
<div class="t" style="left:621px;width:33px;overflow:hidden;top:502px;font:11px/14px 'Liberation Sans', sans-serif;color:#000;letter-spacing:-0.141px;">Wed</div>
<div class="t" style="left:656px;width:66px;overflow:hidden;top:502px;font:11px/14px 'Liberation Sans', sans-serif;color:#000;letter-spacing:0.094px;">27/09/2017</div>
<div class="t" style="left:724px;width:33px;overflow:hidden;top:502px;font:11px/14px 'Liberation Sans', sans-serif;color:#000;letter-spacing:-0.323px;">Thu</div>
<div class="t" style="left:759px;width:66px;overflow:hidden;top:502px;font:11px/14px 'Liberation Sans', sans-serif;color:#000;letter-spacing:0.094px;">05/10/2017</div>
<div class="t" style="left:827px;width:60px;overflow:hidden;top:502px;font:11px/14px 'Liberation Sans', sans-serif;color:#000;letter-spacing:-0.066px;">Tourico <span style="letter-spacing:1.94px">...</span></div>
<div class="t" style="left:963px;width:52px;overflow:hidden;top:502px;font:11px/14px 'Liberation Sans', sans-serif;color:#000;text-align:right;letter-spacing:-0.109px;">378.60</div>
<div class="t" style="left:1018px;width:52px;overflow:hidden;top:502px;font:11px/14px 'Liberation Sans', sans-serif;color:#000;text-align:right;letter-spacing:-0.106px;">94.65</div>
<div class="t" style="left:1073px;width:62px;overflow:hidden;top:502px;font:11px/14px 'Liberation Sans', sans-serif;color:#000;text-align:right;letter-spacing:-0.109px;">378.60</div>
<div class="t" style="left:1138px;width:52px;overflow:hidden;top:502px;font:11px/14px 'Liberation Sans', sans-serif;color:#000;text-align:right;letter-spacing:-0.105px;">0.00</div>
<div class="t" style="left:1219px;width:58px;overflow:hidden;top:502px;font:11px/14px 'Liberation Sans', sans-serif;color:#000;letter-spacing:-0.875px;">XML</div>
<div class="t" style="left:221px;width:73px;overflow:hidden;top:517px;font:11px/14px 'Liberation Sans', sans-serif;color:#000;letter-spacing:-0.206px;">Celebration<span style="letter-spacing:1.94px">...</span></div>
<div class="t" style="left:296px;width:118px;overflow:hidden;top:517px;font:11px/14px 'Liberation Sans', sans-serif;color:#000;letter-spacing:-0.067px;">Baymont Inn &amp; Suite<span style="letter-spacing:1.94px">...</span></div>
<div class="t" style="left:416px;width:38px;overflow:hidden;top:517px;font:11px/14px 'Liberation Sans', sans-serif;color:#000;letter-spacing:0.797px;">3*</div>
<div class="t" style="left:456px;width:73px;overflow:hidden;top:517px;font:11px/14px 'Liberation Sans', sans-serif;color:#000;letter-spacing:-0.151px;">Continental<span style="letter-spacing:1.94px">...</span></div>
<div class="t" style="left:531px;width:88px;overflow:hidden;top:517px;font:11px/14px 'Liberation Sans', sans-serif;color:#000;letter-spacing:-0.375px;">Deluxe</div>
<div class="t" style="left:621px;width:33px;overflow:hidden;top:517px;font:11px/14px 'Liberation Sans', sans-serif;color:#000;letter-spacing:-0.141px;">Wed</div>
<div class="t" style="left:656px;width:66px;overflow:hidden;top:517px;font:11px/14px 'Liberation Sans', sans-serif;color:#000;letter-spacing:0.094px;">27/09/2017</div>
<div class="t" style="left:724px;width:33px;overflow:hidden;top:517px;font:11px/14px 'Liberation Sans', sans-serif;color:#000;letter-spacing:-0.323px;">Thu</div>
<div class="t" style="left:759px;width:66px;overflow:hidden;top:517px;font:11px/14px 'Liberation Sans', sans-serif;color:#000;letter-spacing:0.094px;">05/10/2017</div>
<div class="t" style="left:827px;width:60px;overflow:hidden;top:517px;font:11px/14px 'Liberation Sans', sans-serif;color:#000;letter-spacing:-0.066px;">Tourico <span style="letter-spacing:1.94px">...</span></div>
<div class="t" style="left:887px;width:25px;top:517px;font:11px/14px 'Liberation Sans', sans-serif;color:#000;text-align:center;letter-spacing:1.719px;">*</div>
<div class="t" style="left:963px;width:52px;overflow:hidden;top:517px;font:11px/14px 'Liberation Sans', sans-serif;color:#000;text-align:right;letter-spacing:-0.109px;">378.95</div>
<div class="t" style="left:1018px;width:52px;overflow:hidden;top:517px;font:11px/14px 'Liberation Sans', sans-serif;color:#000;text-align:right;letter-spacing:-0.106px;">94.74</div>
<div class="t" style="left:1073px;width:62px;overflow:hidden;top:517px;font:11px/14px 'Liberation Sans', sans-serif;color:#000;text-align:right;letter-spacing:-0.109px;">378.95</div>
<div class="t" style="left:1138px;width:52px;overflow:hidden;top:517px;font:11px/14px 'Liberation Sans', sans-serif;color:#000;text-align:right;letter-spacing:-0.105px;">0.00</div>
<div class="t" style="left:1219px;width:58px;overflow:hidden;top:517px;font:11px/14px 'Liberation Sans', sans-serif;color:#000;letter-spacing:-0.875px;">XML</div>
<div class="t" style="left:221px;width:73px;overflow:hidden;top:532px;font:11px/14px 'Liberation Sans', sans-serif;color:#000;letter-spacing:0.053px;">Orlando Int<span style="letter-spacing:1.94px">...</span></div>
<div class="t" style="left:296px;width:118px;overflow:hidden;top:532px;font:11px/14px 'Liberation Sans', sans-serif;color:#000;letter-spacing:-0.249px;">Extended Stay Delux<span style="letter-spacing:1.94px">...</span></div>
<div class="t" style="left:416px;width:38px;overflow:hidden;top:532px;font:11px/14px 'Liberation Sans', sans-serif;color:#000;letter-spacing:-0.099px;">3.0</div>
<div class="t" style="left:456px;width:73px;overflow:hidden;top:532px;font:11px/14px 'Liberation Sans', sans-serif;color:#000;letter-spacing:-0.151px;">Continental<span style="letter-spacing:1.94px">...</span></div>
<div class="t" style="left:531px;width:88px;overflow:hidden;top:532px;font:11px/14px 'Liberation Sans', sans-serif;color:#000;letter-spacing:-0.180px;">Studio Queen <span style="letter-spacing:1.94px">...</span></div>
<div class="t" style="left:621px;width:33px;overflow:hidden;top:532px;font:11px/14px 'Liberation Sans', sans-serif;color:#000;letter-spacing:-0.141px;">Wed</div>
<div class="t" style="left:656px;width:66px;overflow:hidden;top:532px;font:11px/14px 'Liberation Sans', sans-serif;color:#000;letter-spacing:0.094px;">27/09/2017</div>
<div class="t" style="left:724px;width:33px;overflow:hidden;top:532px;font:11px/14px 'Liberation Sans', sans-serif;color:#000;letter-spacing:-0.323px;">Thu</div>
<div class="t" style="left:759px;width:66px;overflow:hidden;top:532px;font:11px/14px 'Liberation Sans', sans-serif;color:#000;letter-spacing:0.094px;">05/10/2017</div>
<div class="t" style="left:827px;width:60px;overflow:hidden;top:532px;font:11px/14px 'Liberation Sans', sans-serif;color:#000;letter-spacing:-0.172px;">Get A Bed</div>
<div class="t" style="left:963px;width:52px;overflow:hidden;top:532px;font:11px/14px 'Liberation Sans', sans-serif;color:#000;text-align:right;letter-spacing:-0.109px;">379.66</div>
<div class="t" style="left:1018px;width:52px;overflow:hidden;top:532px;font:11px/14px 'Liberation Sans', sans-serif;color:#000;text-align:right;letter-spacing:-0.106px;">94.92</div>
<div class="t" style="left:1073px;width:62px;overflow:hidden;top:532px;font:11px/14px 'Liberation Sans', sans-serif;color:#000;text-align:right;letter-spacing:-0.109px;">379.66</div>
<div class="t" style="left:1138px;width:52px;overflow:hidden;top:532px;font:11px/14px 'Liberation Sans', sans-serif;color:#000;text-align:right;letter-spacing:-0.105px;">0.00</div>
<div class="t" style="left:1219px;width:58px;overflow:hidden;top:532px;font:11px/14px 'Liberation Sans', sans-serif;color:#000;letter-spacing:-0.875px;">XML</div>
<div class="t" style="left:221px;width:73px;overflow:hidden;top:547px;font:11px/14px 'Liberation Sans', sans-serif;color:#000;letter-spacing:-0.422px;">Kissimmee</div>
<div class="t" style="left:296px;width:118px;overflow:hidden;top:547px;font:11px/14px 'Liberation Sans', sans-serif;color:#000;letter-spacing:-0.164px;">Holiday Inn Orlando <span style="letter-spacing:1.94px">...</span></div>
<div class="t" style="left:416px;width:38px;overflow:hidden;top:547px;font:11px/14px 'Liberation Sans', sans-serif;color:#000;letter-spacing:0.355px;">3.5*</div>
<div class="t" style="left:456px;width:73px;overflow:hidden;top:547px;font:11px/14px 'Liberation Sans', sans-serif;color:#000;letter-spacing:-0.316px;">Roomonly</div>
<div class="t" style="left:531px;width:88px;overflow:hidden;top:547px;font:11px/14px 'Liberation Sans', sans-serif;color:#000;letter-spacing:-0.331px;">Suite, Family S<span style="letter-spacing:1.94px">...</span></div>
<div class="t" style="left:621px;width:33px;overflow:hidden;top:547px;font:11px/14px 'Liberation Sans', sans-serif;color:#000;letter-spacing:-0.141px;">Wed</div>
<div class="t" style="left:656px;width:66px;overflow:hidden;top:547px;font:11px/14px 'Liberation Sans', sans-serif;color:#000;letter-spacing:0.094px;">27/09/2017</div>
<div class="t" style="left:724px;width:33px;overflow:hidden;top:547px;font:11px/14px 'Liberation Sans', sans-serif;color:#000;letter-spacing:-0.323px;">Thu</div>
<div class="t" style="left:759px;width:66px;overflow:hidden;top:547px;font:11px/14px 'Liberation Sans', sans-serif;color:#000;letter-spacing:0.094px;">05/10/2017</div>
<div class="t" style="left:827px;width:60px;overflow:hidden;top:547px;font:11px/14px 'Liberation Sans', sans-serif;color:#000;letter-spacing:-0.066px;">Tourico <span style="letter-spacing:1.94px">...</span></div>
<div class="t" style="left:963px;width:52px;overflow:hidden;top:547px;font:11px/14px 'Liberation Sans', sans-serif;color:#000;text-align:right;letter-spacing:-0.109px;">382.10</div>
<div class="t" style="left:1018px;width:52px;overflow:hidden;top:547px;font:11px/14px 'Liberation Sans', sans-serif;color:#000;text-align:right;letter-spacing:-0.106px;">95.53</div>
<div class="t" style="left:1073px;width:62px;overflow:hidden;top:547px;font:11px/14px 'Liberation Sans', sans-serif;color:#000;text-align:right;letter-spacing:-0.109px;">382.10</div>
<div class="t" style="left:1138px;width:52px;overflow:hidden;top:547px;font:11px/14px 'Liberation Sans', sans-serif;color:#000;text-align:right;letter-spacing:-0.105px;">0.00</div>
<div class="t" style="left:1219px;width:58px;overflow:hidden;top:547px;font:11px/14px 'Liberation Sans', sans-serif;color:#000;letter-spacing:-0.875px;">XML</div>
<div class="t" style="left:221px;width:73px;overflow:hidden;top:562px;font:11px/14px 'Liberation Sans', sans-serif;color:#000;letter-spacing:-0.422px;">Kissimmee</div>
<div class="t" style="left:296px;width:118px;overflow:hidden;top:562px;font:11px/14px 'Liberation Sans', sans-serif;color:#000;letter-spacing:-0.164px;">Holiday Inn Orlando <span style="letter-spacing:1.94px">...</span></div>
<div class="t" style="left:416px;width:38px;overflow:hidden;top:562px;font:11px/14px 'Liberation Sans', sans-serif;color:#000;letter-spacing:0.355px;">3.5*</div>
<div class="t" style="left:456px;width:73px;overflow:hidden;top:562px;font:11px/14px 'Liberation Sans', sans-serif;color:#000;letter-spacing:-0.316px;">Roomonly</div>
<div class="t" style="left:531px;width:88px;overflow:hidden;top:562px;font:11px/14px 'Liberation Sans', sans-serif;color:#000;letter-spacing:-0.082px;">Standard</div>
<div class="t" style="left:621px;width:33px;overflow:hidden;top:562px;font:11px/14px 'Liberation Sans', sans-serif;color:#000;letter-spacing:-0.141px;">Wed</div>
<div class="t" style="left:656px;width:66px;overflow:hidden;top:562px;font:11px/14px 'Liberation Sans', sans-serif;color:#000;letter-spacing:0.094px;">27/09/2017</div>
<div class="t" style="left:724px;width:33px;overflow:hidden;top:562px;font:11px/14px 'Liberation Sans', sans-serif;color:#000;letter-spacing:-0.323px;">Thu</div>
<div class="t" style="left:759px;width:66px;overflow:hidden;top:562px;font:11px/14px 'Liberation Sans', sans-serif;color:#000;letter-spacing:0.094px;">05/10/2017</div>
<div class="t" style="left:827px;width:60px;overflow:hidden;top:562px;font:11px/14px 'Liberation Sans', sans-serif;color:#000;letter-spacing:-0.066px;">Tourico <span style="letter-spacing:1.94px">...</span></div>
<div class="t" style="left:963px;width:52px;overflow:hidden;top:562px;font:11px/14px 'Liberation Sans', sans-serif;color:#000;text-align:right;letter-spacing:-0.109px;">382.10</div>
<div class="t" style="left:1018px;width:52px;overflow:hidden;top:562px;font:11px/14px 'Liberation Sans', sans-serif;color:#000;text-align:right;letter-spacing:-0.106px;">95.53</div>
<div class="t" style="left:1073px;width:62px;overflow:hidden;top:562px;font:11px/14px 'Liberation Sans', sans-serif;color:#000;text-align:right;letter-spacing:-0.109px;">382.10</div>
<div class="t" style="left:1138px;width:52px;overflow:hidden;top:562px;font:11px/14px 'Liberation Sans', sans-serif;color:#000;text-align:right;letter-spacing:-0.105px;">0.00</div>
<div class="t" style="left:1219px;width:58px;overflow:hidden;top:562px;font:11px/14px 'Liberation Sans', sans-serif;color:#000;letter-spacing:-0.875px;">XML</div>
<div class="t" style="left:221px;width:73px;overflow:hidden;top:577px;font:11px/14px 'Liberation Sans', sans-serif;color:#000;letter-spacing:-0.315px;">Universal O<span style="letter-spacing:1.94px">...</span></div>
<div class="t" style="left:296px;width:118px;overflow:hidden;top:577px;font:11px/14px 'Liberation Sans', sans-serif;color:#000;letter-spacing:-0.075px;">Comfort Inn &amp; Suites<span style="letter-spacing:1.94px">...</span></div>
<div class="t" style="left:416px;width:38px;overflow:hidden;top:577px;font:11px/14px 'Liberation Sans', sans-serif;color:#000;letter-spacing:-0.099px;">3.0</div>
<div class="t" style="left:456px;width:73px;overflow:hidden;top:577px;font:11px/14px 'Liberation Sans', sans-serif;color:#000;letter-spacing:-0.126px;">Hot Breakfast</div>
<div class="t" style="left:531px;width:88px;overflow:hidden;top:577px;font:11px/14px 'Liberation Sans', sans-serif;color:#000;letter-spacing:-0.210px;">Double Two Q<span style="letter-spacing:1.94px">...</span></div>
<div class="t" style="left:621px;width:33px;overflow:hidden;top:577px;font:11px/14px 'Liberation Sans', sans-serif;color:#000;letter-spacing:-0.141px;">Wed</div>
<div class="t" style="left:656px;width:66px;overflow:hidden;top:577px;font:11px/14px 'Liberation Sans', sans-serif;color:#000;letter-spacing:0.094px;">27/09/2017</div>
<div class="t" style="left:724px;width:33px;overflow:hidden;top:577px;font:11px/14px 'Liberation Sans', sans-serif;color:#000;letter-spacing:-0.323px;">Thu</div>
<div class="t" style="left:759px;width:66px;overflow:hidden;top:577px;font:11px/14px 'Liberation Sans', sans-serif;color:#000;letter-spacing:0.094px;">05/10/2017</div>
<div class="t" style="left:827px;width:60px;overflow:hidden;top:577px;font:11px/14px 'Liberation Sans', sans-serif;color:#000;letter-spacing:-0.172px;">Get A Bed</div>
<div class="t" style="left:963px;width:52px;overflow:hidden;top:577px;font:11px/14px 'Liberation Sans', sans-serif;color:#000;text-align:right;letter-spacing:-0.109px;">387.76</div>
<div class="t" style="left:1018px;width:52px;overflow:hidden;top:577px;font:11px/14px 'Liberation Sans', sans-serif;color:#000;text-align:right;letter-spacing:-0.106px;">96.94</div>
<div class="t" style="left:1073px;width:62px;overflow:hidden;top:577px;font:11px/14px 'Liberation Sans', sans-serif;color:#000;text-align:right;letter-spacing:-0.109px;">387.76</div>
<div class="t" style="left:1138px;width:52px;overflow:hidden;top:577px;font:11px/14px 'Liberation Sans', sans-serif;color:#000;text-align:right;letter-spacing:-0.105px;">0.00</div>
<div class="t" style="left:1219px;width:58px;overflow:hidden;top:577px;font:11px/14px 'Liberation Sans', sans-serif;color:#000;letter-spacing:-0.875px;">XML</div>
<div class="t" style="left:221px;width:73px;overflow:hidden;top:592px;font:11px/14px 'Liberation Sans', sans-serif;color:#000;letter-spacing:-0.315px;">Universal O<span style="letter-spacing:1.94px">...</span></div>
<div class="t" style="left:296px;width:118px;overflow:hidden;top:592px;font:11px/14px 'Liberation Sans', sans-serif;color:#000;letter-spacing:-0.075px;">Comfort Inn &amp; Suites<span style="letter-spacing:1.94px">...</span></div>
<div class="t" style="left:416px;width:38px;overflow:hidden;top:592px;font:11px/14px 'Liberation Sans', sans-serif;color:#000;letter-spacing:-0.099px;">3.0</div>
<div class="t" style="left:456px;width:73px;overflow:hidden;top:592px;font:11px/14px 'Liberation Sans', sans-serif;color:#000;letter-spacing:-0.126px;">Hot Breakfast</div>
<div class="t" style="left:531px;width:88px;overflow:hidden;top:592px;font:11px/14px 'Liberation Sans', sans-serif;color:#000;letter-spacing:-0.125px;">Twin Two Que<span style="letter-spacing:1.94px">...</span></div>
<div class="t" style="left:621px;width:33px;overflow:hidden;top:592px;font:11px/14px 'Liberation Sans', sans-serif;color:#000;letter-spacing:-0.141px;">Wed</div>
<div class="t" style="left:656px;width:66px;overflow:hidden;top:592px;font:11px/14px 'Liberation Sans', sans-serif;color:#000;letter-spacing:0.094px;">27/09/2017</div>
<div class="t" style="left:724px;width:33px;overflow:hidden;top:592px;font:11px/14px 'Liberation Sans', sans-serif;color:#000;letter-spacing:-0.323px;">Thu</div>
<div class="t" style="left:759px;width:66px;overflow:hidden;top:592px;font:11px/14px 'Liberation Sans', sans-serif;color:#000;letter-spacing:0.094px;">05/10/2017</div>
<div class="t" style="left:827px;width:60px;overflow:hidden;top:592px;font:11px/14px 'Liberation Sans', sans-serif;color:#000;letter-spacing:-0.172px;">Get A Bed</div>
<div class="t" style="left:963px;width:52px;overflow:hidden;top:592px;font:11px/14px 'Liberation Sans', sans-serif;color:#000;text-align:right;letter-spacing:-0.109px;">387.76</div>
<div class="t" style="left:1018px;width:52px;overflow:hidden;top:592px;font:11px/14px 'Liberation Sans', sans-serif;color:#000;text-align:right;letter-spacing:-0.106px;">96.94</div>
<div class="t" style="left:1073px;width:62px;overflow:hidden;top:592px;font:11px/14px 'Liberation Sans', sans-serif;color:#000;text-align:right;letter-spacing:-0.109px;">387.76</div>
<div class="t" style="left:1138px;width:52px;overflow:hidden;top:592px;font:11px/14px 'Liberation Sans', sans-serif;color:#000;text-align:right;letter-spacing:-0.105px;">0.00</div>
<div class="t" style="left:1219px;width:58px;overflow:hidden;top:592px;font:11px/14px 'Liberation Sans', sans-serif;color:#000;letter-spacing:-0.875px;">XML</div>
<div class="t" style="left:221px;width:73px;overflow:hidden;top:607px;font:11px/14px 'Liberation Sans', sans-serif;color:#000;letter-spacing:0.053px;">Orlando Int<span style="letter-spacing:1.94px">...</span></div>
<div class="t" style="left:296px;width:118px;overflow:hidden;top:607px;font:11px/14px 'Liberation Sans', sans-serif;color:#000;letter-spacing:-0.144px;">Extended Stay Ameri<span style="letter-spacing:1.94px">...</span></div>
<div class="t" style="left:416px;width:38px;overflow:hidden;top:607px;font:11px/14px 'Liberation Sans', sans-serif;color:#000;letter-spacing:-0.099px;">3.0</div>
<div class="t" style="left:456px;width:73px;overflow:hidden;top:607px;font:11px/14px 'Liberation Sans', sans-serif;color:#000;letter-spacing:-0.151px;">Continental<span style="letter-spacing:1.94px">...</span></div>
<div class="t" style="left:531px;width:88px;overflow:hidden;top:607px;font:11px/14px 'Liberation Sans', sans-serif;color:#000;letter-spacing:-0.126px;">Studio Standard</div>
<div class="t" style="left:621px;width:33px;overflow:hidden;top:607px;font:11px/14px 'Liberation Sans', sans-serif;color:#000;letter-spacing:-0.141px;">Wed</div>
<div class="t" style="left:656px;width:66px;overflow:hidden;top:607px;font:11px/14px 'Liberation Sans', sans-serif;color:#000;letter-spacing:0.094px;">27/09/2017</div>
<div class="t" style="left:724px;width:33px;overflow:hidden;top:607px;font:11px/14px 'Liberation Sans', sans-serif;color:#000;letter-spacing:-0.323px;">Thu</div>
<div class="t" style="left:759px;width:66px;overflow:hidden;top:607px;font:11px/14px 'Liberation Sans', sans-serif;color:#000;letter-spacing:0.094px;">05/10/2017</div>
<div class="t" style="left:827px;width:60px;overflow:hidden;top:607px;font:11px/14px 'Liberation Sans', sans-serif;color:#000;letter-spacing:-0.172px;">Get A Bed</div>
<div class="t" style="left:963px;width:52px;overflow:hidden;top:607px;font:11px/14px 'Liberation Sans', sans-serif;color:#000;text-align:right;letter-spacing:-0.109px;">388.48</div>
<div class="t" style="left:1018px;width:52px;overflow:hidden;top:607px;font:11px/14px 'Liberation Sans', sans-serif;color:#000;text-align:right;letter-spacing:-0.106px;">97.12</div>
<div class="t" style="left:1073px;width:62px;overflow:hidden;top:607px;font:11px/14px 'Liberation Sans', sans-serif;color:#000;text-align:right;letter-spacing:-0.109px;">388.48</div>
<div class="t" style="left:1138px;width:52px;overflow:hidden;top:607px;font:11px/14px 'Liberation Sans', sans-serif;color:#000;text-align:right;letter-spacing:-0.105px;">0.00</div>
<div class="t" style="left:1219px;width:58px;overflow:hidden;top:607px;font:11px/14px 'Liberation Sans', sans-serif;color:#000;letter-spacing:-0.875px;">XML</div>
<div class="t" style="left:221px;width:73px;overflow:hidden;top:622px;font:11px/14px 'Liberation Sans', sans-serif;color:#000;letter-spacing:-0.422px;">Kissimmee</div>
<div class="t" style="left:296px;width:118px;overflow:hidden;top:622px;font:11px/14px 'Liberation Sans', sans-serif;color:#000;letter-spacing:-0.218px;">Ramada Gateway</div>
<div class="t" style="left:416px;width:38px;overflow:hidden;top:622px;font:11px/14px 'Liberation Sans', sans-serif;color:#000;letter-spacing:-0.099px;">3.0</div>
<div class="t" style="left:456px;width:73px;overflow:hidden;top:622px;font:11px/14px 'Liberation Sans', sans-serif;color:#000;letter-spacing:-0.337px;">Room Only</div>
<div class="t" style="left:531px;width:88px;overflow:hidden;top:622px;font:11px/14px 'Liberation Sans', sans-serif;color:#000;letter-spacing:-0.115px;">Deluxe Tower <span style="letter-spacing:1.94px">...</span></div>
<div class="t" style="left:621px;width:33px;overflow:hidden;top:622px;font:11px/14px 'Liberation Sans', sans-serif;color:#000;letter-spacing:-0.141px;">Wed</div>
<div class="t" style="left:656px;width:66px;overflow:hidden;top:622px;font:11px/14px 'Liberation Sans', sans-serif;color:#000;letter-spacing:0.094px;">27/09/2017</div>
<div class="t" style="left:724px;width:33px;overflow:hidden;top:622px;font:11px/14px 'Liberation Sans', sans-serif;color:#000;letter-spacing:-0.323px;">Thu</div>
<div class="t" style="left:759px;width:66px;overflow:hidden;top:622px;font:11px/14px 'Liberation Sans', sans-serif;color:#000;letter-spacing:0.094px;">05/10/2017</div>
<div class="t" style="left:827px;width:60px;overflow:hidden;top:622px;font:11px/14px 'Liberation Sans', sans-serif;color:#000;letter-spacing:-0.402px;">Ocean B<span style="letter-spacing:1.94px">...</span></div>
<div class="t" style="left:963px;width:52px;overflow:hidden;top:622px;font:11px/14px 'Liberation Sans', sans-serif;color:#000;text-align:right;letter-spacing:-0.109px;">389.57</div>
<div class="t" style="left:1018px;width:52px;overflow:hidden;top:622px;font:11px/14px 'Liberation Sans', sans-serif;color:#000;text-align:right;letter-spacing:-0.106px;">97.39</div>
<div class="t" style="left:1073px;width:62px;overflow:hidden;top:622px;font:11px/14px 'Liberation Sans', sans-serif;color:#000;text-align:right;letter-spacing:-0.109px;">389.57</div>
<div class="t" style="left:1138px;width:52px;overflow:hidden;top:622px;font:11px/14px 'Liberation Sans', sans-serif;color:#000;text-align:right;letter-spacing:-0.105px;">0.00</div>
<div class="t" style="left:1219px;width:58px;overflow:hidden;top:622px;font:11px/14px 'Liberation Sans', sans-serif;color:#000;letter-spacing:-0.875px;">XML</div>
<div class="t" style="left:221px;width:73px;overflow:hidden;top:637px;font:11px/14px 'Liberation Sans', sans-serif;color:#000;letter-spacing:-0.422px;">Kissimmee</div>
<div class="t" style="left:296px;width:118px;overflow:hidden;top:637px;font:11px/14px 'Liberation Sans', sans-serif;color:#000;letter-spacing:-0.218px;">Ramada Gateway</div>
<div class="t" style="left:416px;width:38px;overflow:hidden;top:637px;font:11px/14px 'Liberation Sans', sans-serif;color:#000;letter-spacing:-0.099px;">3.0</div>
<div class="t" style="left:456px;width:73px;overflow:hidden;top:637px;font:11px/14px 'Liberation Sans', sans-serif;color:#000;letter-spacing:-0.337px;">Room Only</div>
<div class="t" style="left:531px;width:88px;overflow:hidden;top:637px;font:11px/14px 'Liberation Sans', sans-serif;color:#000;letter-spacing:-0.115px;">Deluxe Tower <span style="letter-spacing:1.94px">...</span></div>
<div class="t" style="left:621px;width:33px;overflow:hidden;top:637px;font:11px/14px 'Liberation Sans', sans-serif;color:#000;letter-spacing:-0.141px;">Wed</div>
<div class="t" style="left:656px;width:66px;overflow:hidden;top:637px;font:11px/14px 'Liberation Sans', sans-serif;color:#000;letter-spacing:0.094px;">27/09/2017</div>
<div class="t" style="left:724px;width:33px;overflow:hidden;top:637px;font:11px/14px 'Liberation Sans', sans-serif;color:#000;letter-spacing:-0.323px;">Thu</div>
<div class="t" style="left:759px;width:66px;overflow:hidden;top:637px;font:11px/14px 'Liberation Sans', sans-serif;color:#000;letter-spacing:0.094px;">05/10/2017</div>
<div class="t" style="left:827px;width:60px;overflow:hidden;top:637px;font:11px/14px 'Liberation Sans', sans-serif;color:#000;letter-spacing:-0.402px;">Ocean B<span style="letter-spacing:1.94px">...</span></div>
<div class="t" style="left:963px;width:52px;overflow:hidden;top:637px;font:11px/14px 'Liberation Sans', sans-serif;color:#000;text-align:right;letter-spacing:-0.109px;">389.57</div>
<div class="t" style="left:1018px;width:52px;overflow:hidden;top:637px;font:11px/14px 'Liberation Sans', sans-serif;color:#000;text-align:right;letter-spacing:-0.106px;">97.39</div>
<div class="t" style="left:1073px;width:62px;overflow:hidden;top:637px;font:11px/14px 'Liberation Sans', sans-serif;color:#000;text-align:right;letter-spacing:-0.109px;">389.57</div>
<div class="t" style="left:1138px;width:52px;overflow:hidden;top:637px;font:11px/14px 'Liberation Sans', sans-serif;color:#000;text-align:right;letter-spacing:-0.105px;">0.00</div>
<div class="t" style="left:1219px;width:58px;overflow:hidden;top:637px;font:11px/14px 'Liberation Sans', sans-serif;color:#000;letter-spacing:-0.875px;">XML</div>
<div class="t" style="left:221px;width:73px;overflow:hidden;top:652px;font:11px/14px 'Liberation Sans', sans-serif;color:#000;letter-spacing:0.183px;">Internation<span style="letter-spacing:1.94px">...</span></div>
<div class="t" style="left:296px;width:118px;overflow:hidden;top:652px;font:11px/14px 'Liberation Sans', sans-serif;color:#000;letter-spacing:-0.340px;">Enclave Suites</div>
<div class="t" style="left:416px;width:38px;overflow:hidden;top:652px;font:11px/14px 'Liberation Sans', sans-serif;color:#000;letter-spacing:-0.099px;">3.0</div>
<div class="t" style="left:456px;width:73px;overflow:hidden;top:652px;font:11px/14px 'Liberation Sans', sans-serif;color:#000;letter-spacing:-0.266px;">Bed And Br<span style="letter-spacing:1.94px">...</span></div>
<div class="t" style="left:531px;width:88px;overflow:hidden;top:652px;font:11px/14px 'Liberation Sans', sans-serif;color:#000;letter-spacing:-0.269px;">Deluxe Studio</div>
<div class="t" style="left:621px;width:33px;overflow:hidden;top:652px;font:11px/14px 'Liberation Sans', sans-serif;color:#000;letter-spacing:-0.141px;">Wed</div>
<div class="t" style="left:656px;width:66px;overflow:hidden;top:652px;font:11px/14px 'Liberation Sans', sans-serif;color:#000;letter-spacing:0.094px;">27/09/2017</div>
<div class="t" style="left:724px;width:33px;overflow:hidden;top:652px;font:11px/14px 'Liberation Sans', sans-serif;color:#000;letter-spacing:-0.323px;">Thu</div>
<div class="t" style="left:759px;width:66px;overflow:hidden;top:652px;font:11px/14px 'Liberation Sans', sans-serif;color:#000;letter-spacing:0.094px;">05/10/2017</div>
<div class="t" style="left:827px;width:60px;overflow:hidden;top:652px;font:11px/14px 'Liberation Sans', sans-serif;color:#000;letter-spacing:-0.402px;">Ocean B<span style="letter-spacing:1.94px">...</span></div>
<div class="t" style="left:963px;width:52px;overflow:hidden;top:652px;font:11px/14px 'Liberation Sans', sans-serif;color:#000;text-align:right;letter-spacing:-0.109px;">395.65</div>
<div class="t" style="left:1018px;width:52px;overflow:hidden;top:652px;font:11px/14px 'Liberation Sans', sans-serif;color:#000;text-align:right;letter-spacing:-0.106px;">98.91</div>
<div class="t" style="left:1073px;width:62px;overflow:hidden;top:652px;font:11px/14px 'Liberation Sans', sans-serif;color:#000;text-align:right;letter-spacing:-0.109px;">395.65</div>
<div class="t" style="left:1138px;width:52px;overflow:hidden;top:652px;font:11px/14px 'Liberation Sans', sans-serif;color:#000;text-align:right;letter-spacing:-0.105px;">0.00</div>
<div class="t" style="left:1219px;width:58px;overflow:hidden;top:652px;font:11px/14px 'Liberation Sans', sans-serif;color:#000;letter-spacing:-0.875px;">XML</div>
<div class="t" style="left:221px;width:73px;overflow:hidden;top:667px;font:11px/14px 'Liberation Sans', sans-serif;color:#000;letter-spacing:0.053px;">Orlando Int<span style="letter-spacing:1.94px">...</span></div>
<div class="t" style="left:296px;width:118px;overflow:hidden;top:667px;font:11px/14px 'Liberation Sans', sans-serif;color:#000;letter-spacing:-0.243px;">Ramada Plaza Resort<span style="letter-spacing:1.94px">...</span></div>
<div class="t" style="left:416px;width:38px;overflow:hidden;top:667px;font:11px/14px 'Liberation Sans', sans-serif;color:#000;letter-spacing:-0.099px;">2.0</div>
<div class="t" style="left:456px;width:73px;overflow:hidden;top:667px;font:11px/14px 'Liberation Sans', sans-serif;color:#000;letter-spacing:-0.151px;">Continental<span style="letter-spacing:1.94px">...</span></div>
<div class="t" style="left:531px;width:88px;overflow:hidden;top:667px;font:11px/14px 'Liberation Sans', sans-serif;color:#000;letter-spacing:-0.320px;">Double Deluxe</div>
<div class="t" style="left:621px;width:33px;overflow:hidden;top:667px;font:11px/14px 'Liberation Sans', sans-serif;color:#000;letter-spacing:-0.141px;">Wed</div>
<div class="t" style="left:656px;width:66px;overflow:hidden;top:667px;font:11px/14px 'Liberation Sans', sans-serif;color:#000;letter-spacing:0.094px;">27/09/2017</div>
<div class="t" style="left:724px;width:33px;overflow:hidden;top:667px;font:11px/14px 'Liberation Sans', sans-serif;color:#000;letter-spacing:-0.323px;">Thu</div>
<div class="t" style="left:759px;width:66px;overflow:hidden;top:667px;font:11px/14px 'Liberation Sans', sans-serif;color:#000;letter-spacing:0.094px;">05/10/2017</div>
<div class="t" style="left:827px;width:60px;overflow:hidden;top:667px;font:11px/14px 'Liberation Sans', sans-serif;color:#000;letter-spacing:-0.172px;">Get A Bed</div>
<div class="t" style="left:963px;width:52px;overflow:hidden;top:667px;font:11px/14px 'Liberation Sans', sans-serif;color:#000;text-align:right;letter-spacing:-0.109px;">395.83</div>
<div class="t" style="left:1018px;width:52px;overflow:hidden;top:667px;font:11px/14px 'Liberation Sans', sans-serif;color:#000;text-align:right;letter-spacing:-0.106px;">98.96</div>
<div class="t" style="left:1073px;width:62px;overflow:hidden;top:667px;font:11px/14px 'Liberation Sans', sans-serif;color:#000;text-align:right;letter-spacing:-0.109px;">395.83</div>
<div class="t" style="left:1138px;width:52px;overflow:hidden;top:667px;font:11px/14px 'Liberation Sans', sans-serif;color:#000;text-align:right;letter-spacing:-0.105px;">0.00</div>
<div class="t" style="left:1219px;width:58px;overflow:hidden;top:667px;font:11px/14px 'Liberation Sans', sans-serif;color:#000;letter-spacing:-0.875px;">XML</div>
<div class="t" style="left:221px;width:73px;overflow:hidden;top:682px;font:11px/14px 'Liberation Sans', sans-serif;color:#000;letter-spacing:-0.275px;">Universal St<span style="letter-spacing:1.94px">...</span></div>
<div class="t" style="left:296px;width:118px;overflow:hidden;top:682px;font:11px/14px 'Liberation Sans', sans-serif;color:#000;letter-spacing:-0.262px;">Coco Key Hotel &amp; Wa<span style="letter-spacing:1.94px">...</span></div>
<div class="t" style="left:416px;width:38px;overflow:hidden;top:682px;font:11px/14px 'Liberation Sans', sans-serif;color:#000;letter-spacing:0.797px;">4*</div>
<div class="t" style="left:456px;width:73px;overflow:hidden;top:682px;font:11px/14px 'Liberation Sans', sans-serif;color:#000;letter-spacing:-0.316px;">Roomonly</div>
<div class="t" style="left:531px;width:88px;overflow:hidden;top:682px;font:11px/14px 'Liberation Sans', sans-serif;color:#000;letter-spacing:-0.210px;">Standard, Leis<span style="letter-spacing:1.94px">...</span></div>
<div class="t" style="left:621px;width:33px;overflow:hidden;top:682px;font:11px/14px 'Liberation Sans', sans-serif;color:#000;letter-spacing:-0.141px;">Wed</div>
<div class="t" style="left:656px;width:66px;overflow:hidden;top:682px;font:11px/14px 'Liberation Sans', sans-serif;color:#000;letter-spacing:0.094px;">27/09/2017</div>
<div class="t" style="left:724px;width:33px;overflow:hidden;top:682px;font:11px/14px 'Liberation Sans', sans-serif;color:#000;letter-spacing:-0.323px;">Thu</div>
<div class="t" style="left:759px;width:66px;overflow:hidden;top:682px;font:11px/14px 'Liberation Sans', sans-serif;color:#000;letter-spacing:0.094px;">05/10/2017</div>
<div class="t" style="left:827px;width:60px;overflow:hidden;top:682px;font:11px/14px 'Liberation Sans', sans-serif;color:#000;letter-spacing:-0.066px;">Tourico <span style="letter-spacing:1.94px">...</span></div>
<div class="t" style="left:887px;width:25px;top:682px;font:11px/14px 'Liberation Sans', sans-serif;color:#000;text-align:center;letter-spacing:1.719px;">*</div>
<div class="t" style="left:963px;width:52px;overflow:hidden;top:682px;font:11px/14px 'Liberation Sans', sans-serif;color:#000;text-align:right;letter-spacing:-0.109px;">398.31</div>
<div class="t" style="left:1018px;width:52px;overflow:hidden;top:682px;font:11px/14px 'Liberation Sans', sans-serif;color:#000;text-align:right;letter-spacing:-0.106px;">99.58</div>
<div class="t" style="left:1073px;width:62px;overflow:hidden;top:682px;font:11px/14px 'Liberation Sans', sans-serif;color:#000;text-align:right;letter-spacing:-0.109px;">398.31</div>
<div class="t" style="left:1138px;width:52px;overflow:hidden;top:682px;font:11px/14px 'Liberation Sans', sans-serif;color:#000;text-align:right;letter-spacing:-0.105px;">0.00</div>
<div class="t" style="left:1219px;width:58px;overflow:hidden;top:682px;font:11px/14px 'Liberation Sans', sans-serif;color:#000;letter-spacing:-0.875px;">XML</div>
<div class="t" style="left:221px;width:73px;overflow:hidden;top:697px;font:11px/14px 'Liberation Sans', sans-serif;color:#000;letter-spacing:-0.099px;">Maingate/Ki<span style="letter-spacing:1.94px">...</span></div>
<div class="t" style="left:296px;width:118px;overflow:hidden;top:697px;font:11px/14px 'Liberation Sans', sans-serif;color:#000;letter-spacing:-0.076px;">Rodeway Inn Maingate</div>
<div class="t" style="left:416px;width:38px;overflow:hidden;top:697px;font:11px/14px 'Liberation Sans', sans-serif;color:#000;letter-spacing:-0.099px;">2.0</div>
<div class="t" style="left:456px;width:73px;overflow:hidden;top:697px;font:11px/14px 'Liberation Sans', sans-serif;color:#000;letter-spacing:-0.337px;">Room Only</div>
<div class="t" style="left:531px;width:88px;overflow:hidden;top:697px;font:11px/14px 'Liberation Sans', sans-serif;color:#000;letter-spacing:-0.269px;">Double Two Beds</div>
<div class="t" style="left:621px;width:33px;overflow:hidden;top:697px;font:11px/14px 'Liberation Sans', sans-serif;color:#000;letter-spacing:-0.141px;">Wed</div>
<div class="t" style="left:656px;width:66px;overflow:hidden;top:697px;font:11px/14px 'Liberation Sans', sans-serif;color:#000;letter-spacing:0.094px;">27/09/2017</div>
<div class="t" style="left:724px;width:33px;overflow:hidden;top:697px;font:11px/14px 'Liberation Sans', sans-serif;color:#000;letter-spacing:-0.323px;">Thu</div>
<div class="t" style="left:759px;width:66px;overflow:hidden;top:697px;font:11px/14px 'Liberation Sans', sans-serif;color:#000;letter-spacing:0.094px;">05/10/2017</div>
<div class="t" style="left:827px;width:60px;overflow:hidden;top:697px;font:11px/14px 'Liberation Sans', sans-serif;color:#000;letter-spacing:-0.172px;">Get A Bed</div>
<div class="t" style="left:963px;width:52px;overflow:hidden;top:697px;font:11px/14px 'Liberation Sans', sans-serif;color:#000;text-align:right;letter-spacing:-0.109px;">399.44</div>
<div class="t" style="left:1018px;width:52px;overflow:hidden;top:697px;font:11px/14px 'Liberation Sans', sans-serif;color:#000;text-align:right;letter-spacing:-0.106px;">99.86</div>
<div class="t" style="left:1073px;width:62px;overflow:hidden;top:697px;font:11px/14px 'Liberation Sans', sans-serif;color:#000;text-align:right;letter-spacing:-0.109px;">399.44</div>
<div class="t" style="left:1138px;width:52px;overflow:hidden;top:697px;font:11px/14px 'Liberation Sans', sans-serif;color:#000;text-align:right;letter-spacing:-0.105px;">0.00</div>
<div class="t" style="left:1219px;width:58px;overflow:hidden;top:697px;font:11px/14px 'Liberation Sans', sans-serif;color:#000;letter-spacing:-0.875px;">XML</div>
<div class="t" style="left:221px;width:73px;overflow:hidden;top:712px;font:11px/14px 'Liberation Sans', sans-serif;color:#000;letter-spacing:-0.099px;">Maingate/Ki<span style="letter-spacing:1.94px">...</span></div>
<div class="t" style="left:296px;width:118px;overflow:hidden;top:712px;font:11px/14px 'Liberation Sans', sans-serif;color:#000;letter-spacing:-0.076px;">Rodeway Inn Maingate</div>
<div class="t" style="left:416px;width:38px;overflow:hidden;top:712px;font:11px/14px 'Liberation Sans', sans-serif;color:#000;letter-spacing:-0.099px;">2.0</div>
<div class="t" style="left:456px;width:73px;overflow:hidden;top:712px;font:11px/14px 'Liberation Sans', sans-serif;color:#000;letter-spacing:-0.337px;">Room Only</div>
<div class="t" style="left:531px;width:88px;overflow:hidden;top:712px;font:11px/14px 'Liberation Sans', sans-serif;color:#000;letter-spacing:-0.158px;">Twin Two Dou<span style="letter-spacing:1.94px">...</span></div>
<div class="t" style="left:621px;width:33px;overflow:hidden;top:712px;font:11px/14px 'Liberation Sans', sans-serif;color:#000;letter-spacing:-0.141px;">Wed</div>
<div class="t" style="left:656px;width:66px;overflow:hidden;top:712px;font:11px/14px 'Liberation Sans', sans-serif;color:#000;letter-spacing:0.094px;">27/09/2017</div>
<div class="t" style="left:724px;width:33px;overflow:hidden;top:712px;font:11px/14px 'Liberation Sans', sans-serif;color:#000;letter-spacing:-0.323px;">Thu</div>
<div class="t" style="left:759px;width:66px;overflow:hidden;top:712px;font:11px/14px 'Liberation Sans', sans-serif;color:#000;letter-spacing:0.094px;">05/10/2017</div>
<div class="t" style="left:827px;width:60px;overflow:hidden;top:712px;font:11px/14px 'Liberation Sans', sans-serif;color:#000;letter-spacing:-0.172px;">Get A Bed</div>
<div class="t" style="left:963px;width:52px;overflow:hidden;top:712px;font:11px/14px 'Liberation Sans', sans-serif;color:#000;text-align:right;letter-spacing:-0.109px;">399.44</div>
<div class="t" style="left:1018px;width:52px;overflow:hidden;top:712px;font:11px/14px 'Liberation Sans', sans-serif;color:#000;text-align:right;letter-spacing:-0.106px;">99.86</div>
<div class="t" style="left:1073px;width:62px;overflow:hidden;top:712px;font:11px/14px 'Liberation Sans', sans-serif;color:#000;text-align:right;letter-spacing:-0.109px;">399.44</div>
<div class="t" style="left:1138px;width:52px;overflow:hidden;top:712px;font:11px/14px 'Liberation Sans', sans-serif;color:#000;text-align:right;letter-spacing:-0.105px;">0.00</div>
<div class="t" style="left:1219px;width:58px;overflow:hidden;top:712px;font:11px/14px 'Liberation Sans', sans-serif;color:#000;letter-spacing:-0.875px;">XML</div>
<div class="t" style="left:221px;width:73px;overflow:hidden;top:727px;font:11px/14px 'Liberation Sans', sans-serif;color:#000;letter-spacing:-0.422px;">Kissimmee</div>
<div class="t" style="left:296px;width:118px;overflow:hidden;top:727px;font:11px/14px 'Liberation Sans', sans-serif;color:#000;letter-spacing:-0.067px;">Baymont Inn &amp; Suite<span style="letter-spacing:1.94px">...</span></div>
<div class="t" style="left:416px;width:38px;overflow:hidden;top:727px;font:11px/14px 'Liberation Sans', sans-serif;color:#000;letter-spacing:-0.099px;">3.0</div>
<div class="t" style="left:456px;width:73px;overflow:hidden;top:727px;font:11px/14px 'Liberation Sans', sans-serif;color:#000;letter-spacing:-0.151px;">Continental<span style="letter-spacing:1.94px">...</span></div>
<div class="t" style="left:531px;width:88px;overflow:hidden;top:727px;font:11px/14px 'Liberation Sans', sans-serif;color:#000;letter-spacing:-0.284px;">Deluxe - 2 Beds</div>
<div class="t" style="left:621px;width:33px;overflow:hidden;top:727px;font:11px/14px 'Liberation Sans', sans-serif;color:#000;letter-spacing:-0.141px;">Wed</div>
<div class="t" style="left:656px;width:66px;overflow:hidden;top:727px;font:11px/14px 'Liberation Sans', sans-serif;color:#000;letter-spacing:0.094px;">27/09/2017</div>
<div class="t" style="left:724px;width:33px;overflow:hidden;top:727px;font:11px/14px 'Liberation Sans', sans-serif;color:#000;letter-spacing:-0.323px;">Thu</div>
<div class="t" style="left:759px;width:66px;overflow:hidden;top:727px;font:11px/14px 'Liberation Sans', sans-serif;color:#000;letter-spacing:0.094px;">05/10/2017</div>
<div class="t" style="left:827px;width:60px;overflow:hidden;top:727px;font:11px/14px 'Liberation Sans', sans-serif;color:#000;letter-spacing:-0.172px;">Get A Bed</div>
<div class="t" style="left:963px;width:52px;overflow:hidden;top:727px;font:11px/14px 'Liberation Sans', sans-serif;color:#000;text-align:right;letter-spacing:-0.109px;">400.94</div>
<div class="t" style="left:1018px;width:52px;overflow:hidden;top:727px;font:11px/14px 'Liberation Sans', sans-serif;color:#000;text-align:right;letter-spacing:-0.109px;">100.24</div>
<div class="t" style="left:1073px;width:62px;overflow:hidden;top:727px;font:11px/14px 'Liberation Sans', sans-serif;color:#000;text-align:right;letter-spacing:-0.109px;">400.94</div>
<div class="t" style="left:1138px;width:52px;overflow:hidden;top:727px;font:11px/14px 'Liberation Sans', sans-serif;color:#000;text-align:right;letter-spacing:-0.105px;">0.00</div>
<div class="t" style="left:1219px;width:58px;overflow:hidden;top:727px;font:11px/14px 'Liberation Sans', sans-serif;color:#000;letter-spacing:-0.875px;">XML</div>
<div class="t" style="left:221px;width:73px;overflow:hidden;top:742px;font:11px/14px 'Liberation Sans', sans-serif;color:#000;letter-spacing:0.053px;">Orlando Int<span style="letter-spacing:1.94px">...</span></div>
<div class="t" style="left:296px;width:118px;overflow:hidden;top:742px;font:11px/14px 'Liberation Sans', sans-serif;color:#000;letter-spacing:0.046px;">Rosen Inn Internatio<span style="letter-spacing:1.94px">...</span></div>
<div class="t" style="left:416px;width:38px;overflow:hidden;top:742px;font:11px/14px 'Liberation Sans', sans-serif;color:#000;letter-spacing:-0.099px;">3.0</div>
<div class="t" style="left:456px;width:73px;overflow:hidden;top:742px;font:11px/14px 'Liberation Sans', sans-serif;color:#000;letter-spacing:-0.337px;">Room Only</div>
<div class="t" style="left:531px;width:88px;overflow:hidden;top:742px;font:11px/14px 'Liberation Sans', sans-serif;color:#000;letter-spacing:-0.230px;">Quad</div>
<div class="t" style="left:621px;width:33px;overflow:hidden;top:742px;font:11px/14px 'Liberation Sans', sans-serif;color:#000;letter-spacing:-0.141px;">Wed</div>
<div class="t" style="left:656px;width:66px;overflow:hidden;top:742px;font:11px/14px 'Liberation Sans', sans-serif;color:#000;letter-spacing:0.094px;">27/09/2017</div>
<div class="t" style="left:724px;width:33px;overflow:hidden;top:742px;font:11px/14px 'Liberation Sans', sans-serif;color:#000;letter-spacing:-0.323px;">Thu</div>
<div class="t" style="left:759px;width:66px;overflow:hidden;top:742px;font:11px/14px 'Liberation Sans', sans-serif;color:#000;letter-spacing:0.094px;">05/10/2017</div>
<div class="t" style="left:827px;width:60px;overflow:hidden;top:742px;font:11px/14px 'Liberation Sans', sans-serif;color:#000;letter-spacing:-0.172px;">Get A Bed</div>
<div class="t" style="left:887px;width:25px;top:742px;font:11px/14px 'Liberation Sans', sans-serif;color:#000;text-align:center;letter-spacing:1.719px;">*</div>
<div class="t" style="left:963px;width:52px;overflow:hidden;top:742px;font:11px/14px 'Liberation Sans', sans-serif;color:#000;text-align:right;letter-spacing:-0.109px;">402.35</div>
<div class="t" style="left:1018px;width:52px;overflow:hidden;top:742px;font:11px/14px 'Liberation Sans', sans-serif;color:#000;text-align:right;letter-spacing:-0.109px;">100.59</div>
<div class="t" style="left:1073px;width:62px;overflow:hidden;top:742px;font:11px/14px 'Liberation Sans', sans-serif;color:#000;text-align:right;letter-spacing:-0.109px;">402.35</div>
<div class="t" style="left:1138px;width:52px;overflow:hidden;top:742px;font:11px/14px 'Liberation Sans', sans-serif;color:#000;text-align:right;letter-spacing:-0.105px;">0.00</div>
<div class="t" style="left:1219px;width:58px;overflow:hidden;top:742px;font:11px/14px 'Liberation Sans', sans-serif;color:#000;letter-spacing:-0.875px;">XML</div>
<div class="b" style="left:1573px;top:153px;width:16px;height:602px;background-color:#fff;background-image:repeating-conic-gradient(#D4D0C8 0 25%, #fff 0 50%);background-size:2px 2px"></div>
<div class="b" style="left:1573px;top:153px;width:16px;height:16px;background:#D4D0C8;box-shadow:inset -1px -1px 0 #404040, inset 1px 1px 0 #FFFFFF, inset -2px -2px 0 #808080, inset 2px 2px 0 #D4D0C8;"></div>
<svg class="b" style="left:1573px;top:153px" width="16" height="16" viewBox="0 0 16 16"><path d="M4 10 L11 10 L7.5 6.5 Z" fill="#000"/></svg>
<div class="b" style="left:1573px;top:177px;width:16px;height:11px;background:#D4D0C8;box-shadow:inset -1px -1px 0 #404040, inset 1px 1px 0 #FFFFFF, inset -2px -2px 0 #808080, inset 2px 2px 0 #D4D0C8;"></div>
<div class="b" style="left:1573px;top:740px;width:16px;height:16px;background:#D4D0C8;box-shadow:inset -1px -1px 0 #404040, inset 1px 1px 0 #FFFFFF, inset -2px -2px 0 #808080, inset 2px 2px 0 #D4D0C8;"></div>
<svg class="b" style="left:1573px;top:740px" width="16" height="16" viewBox="0 0 16 16"><path d="M4.5 6 L11.5 6 L8 9.5 Z" fill="#000"/></svg>
<div class="t" style="left:222px;top:782px;font:11px/14px 'Liberation Sans', sans-serif;color:#000;letter-spacing:-0.023px;">First portion: 6.3 sec, total search time: 24.0 sec</div>
<div class="b" style="left:1560px;top:778px;width:23px;height:22px;background:#D4D0C8;box-shadow:inset -1px -1px 0 #404040, inset 1px 1px 0 #FFFFFF, inset -2px -2px 0 #808080, inset 2px 2px 0 #D4D0C8;"></div>
<svg class="b" style="left:1560px;top:778px" width="24" height="23" viewBox="0 0 24 23"><circle cx="12.5" cy="6.2" r="1.7" fill="#1A50B0"/><path d="M10 9 L13.7 9 L13.7 16.5 L15 16.5 L15 17.6 L9.8 17.6 L9.8 16.5 L11.2 16.5 L11.2 10.2 L10 10.2 Z" fill="#1A50B0"/></svg>
<div class="b" style="left:215px;top:805px;width:1378px;height:1px;background:#808080"></div>
<div class="b" style="left:215px;top:806px;width:52px;height:16px;background:#D4D0C8"></div>
<div class="b" style="left:267px;top:806px;width:1px;height:16px;background:#808080"></div>
<div class="t" style="left:218px;top:807px;font:11px/14px 'Liberation Sans', sans-serif;color:#000;letter-spacing:-0.295px;">Summary</div>
<div class="b" style="left:268px;top:806px;width:40px;height:16px;background:#D4D0C8"></div>
<div class="b" style="left:308px;top:806px;width:1px;height:16px;background:#808080"></div>
<div class="t" style="left:271px;top:807px;font:11px/14px 'Liberation Sans', sans-serif;color:#000;letter-spacing:-0.310px;">Search</div>
<div class="b" style="left:309px;top:806px;width:50px;height:16px;background:#C0FFC0"></div>
<div class="b" style="left:359px;top:806px;width:1px;height:16px;background:#808080"></div>
<div class="t" style="left:312px;top:807px;font:11px/14px 'Liberation Sans', sans-serif;color:#000;letter-spacing:-0.636px;">Car MCO</div>
<div class="b" style="left:360px;top:806px;width:62px;height:16px;background:#C4C4FF"></div>
<div class="b" style="left:422px;top:806px;width:1px;height:16px;background:#808080"></div>
<div class="t" style="left:363px;top:807px;font:11px/14px 'Liberation Sans', sans-serif;color:#000;letter-spacing:-0.269px;">Acc 4A TPA</div>
<div class="b" style="left:422px;top:805px;width:85px;height:17px;background:#000080;border-radius:0 0 3px 3px"></div>
<div class="b" style="left:507px;top:806px;width:1px;height:16px;background:#808080"></div>
<div class="t" style="left:426px;top:807px;font:11px/14px 'Liberation Sans', sans-serif;color:#fff;letter-spacing:-0.237px;">Acc 4A MCO; 8n</div>
<div class="b" style="left:508px;top:806px;width:96px;height:16px;background:#D4D0C8"></div>
<div class="b" style="left:604px;top:806px;width:1px;height:16px;background:#808080"></div>
<div class="t" style="left:511px;top:807px;font:11px/14px 'Liberation Sans', sans-serif;color:#000;letter-spacing:-0.302px;">Financial Summary</div>
<div class="t" style="left:781px;top:831px;font:11px/14px 'Liberation Sans', sans-serif;color:#000;letter-spacing:-0.135px;">User: 481 - Harika Parmar</div>
<div class="t" style="left:917px;top:831px;font:11px/14px 'Liberation Sans', sans-serif;color:#000;letter-spacing:-0.117px;">Retailer: 'Ocean-Florida'</div>
<div class="t" style="left:1043px;top:831px;font:11px/14px 'Liberation Sans', sans-serif;color:#000;letter-spacing:-0.143px;">Client: none</div>
<div class="t" style="right:9px;top:831px;font:11px/14px 'Liberation Sans', sans-serif;color:#000;text-align:right;letter-spacing:-0.135px;">11:10 GMT</div>
<div class="b" style="left:0px;top:857px;width:1600px;height:1px;background:#fff"></div>
<div class="b" style="left:2px;top:860px;width:52px;height:38px;background:#D4D0C8;box-shadow:inset -1px -1px 0 #404040, inset 1px 1px 0 #FFFFFF, inset -2px -2px 0 #808080, inset 2px 2px 0 #D4D0C8;"></div>
<svg class="b" style="left:4px;top:870px" width="16" height="16" viewBox="0 0 16 16"><path d="M1 3 Q4 1.5 7.5 3 L7 7.5 Q4 6 1 7.5 Z" fill="#F05020"/><path d="M8.5 3 Q12 4.5 15 3 L14.5 7.5 Q11.5 9 8 7.5 Z" fill="#60B030"/><path d="M1 8.5 Q4 7 7 8.5 L6.5 13 Q3.5 11.5 0.5 13 Z" fill="#2080E0"/><path d="M8 8.5 Q11 10 14.5 8.5 L14 13 Q11 14.5 7.5 13 Z" fill="#F8C020"/></svg>
<div class="t" style="left:21px;top:871px;font:bold 12px/14px 'Liberation Sans', sans-serif;color:#000;">Start</div>
<div class="b" style="left:63px;top:860px;width:160px;height:38px;background:#fff;box-shadow:inset 1px 1px 0 #404040, inset 2px 2px 0 #808080, inset -1px -1px 0 #FFFFFF, inset -2px -2px 0 #D4D0C8"></div>
<svg class="b" style="left:69px;top:867px" width="30" height="24" viewBox="0 0 30 24"><defs><radialGradient id="og2" cx="0.3" cy="0.25" r="0.9"><stop offset="0" stop-color="#FFE850"/><stop offset="0.45" stop-color="#F0A020"/><stop offset="1" stop-color="#B84A10"/></radialGradient></defs><path d="M1 8 L5 2 L27 7 L17 20 L10 19 Z" fill="url(#og2)"/></svg>
<div class="t" style="left:102px;top:871px;font:bold 12px/14px 'Liberation Sans', sans-serif;color:#000;">Interactive - Ocea...</div>
<div class="b" style="left:1384px;top:860px;width:214px;height:38px;background:#D4D0C8;box-shadow:inset 1px 1px 0 #808080, inset -1px -1px 0 #FFFFFF"></div>
<svg class="b" style="left:1391px;top:871px" width="16" height="16" viewBox="0 0 16 16"><rect x="0.5" y="0.5" width="15" height="15" rx="2" fill="#E86A18" stroke="#B04A10"/><path d="M4 11.5 L12 11.5 M4 13.5 L12 13.5 M8 3 Q6 6 9 8 M10 4 Q12 6 10 9" stroke="#fff" stroke-width="1.2" fill="none"/></svg>
<svg class="b" style="left:1415px;top:871px" width="16" height="16" viewBox="0 0 16 16"><path d="M1 2 L8 1 L8 8 L1 9 Z" fill="#F0A020"/><path d="M8 1 L15 2 L15 8 L8 8 Z" fill="#3070D0"/><path d="M1 9 L8 8 L8 15 L1 14 Z" fill="#40A030"/><path d="M8 8 L15 8 L15 14 L8 15 Z" fill="#D03030"/></svg>
<svg class="b" style="left:1439px;top:873px" width="16" height="12" viewBox="0 0 16 12"><rect x="0.5" y="2" width="12" height="6" fill="#50C040" stroke="#207020"/><path d="M2 8 L2 10 M4 8 L4 10 M6 8 L6 10 M8 8 L8 10" stroke="#D0B020"/><path d="M13 0 L13 10 L15 10 M13 3 L15 3" stroke="#202020"/></svg>
<svg class="b" style="left:1463px;top:871px" width="16" height="16" viewBox="0 0 16 16"><rect x="5" y="3" width="10" height="9" fill="#C8C8C8" stroke="#808080"/><path d="M8 12 L8 14 L12 14" stroke="#808080"/><path d="M3 1 L3 15 M1 1 L1 4 L5 4 L5 1" stroke="#606060" fill="none"/></svg>
<svg class="b" style="left:1487px;top:871px" width="16" height="16" viewBox="0 0 16 16"><path d="M1 5 L4 5 L8 1 L8 14 L4 10 L1 10 Z" fill="#E8E8E8" stroke="#909090"/><circle cx="11.5" cy="11.5" r="4" fill="#E02020"/><path d="M9.7 9.7 L13.3 13.3 M13.3 9.7 L9.7 13.3" stroke="#fff" stroke-width="1.2"/></svg>
<div class="t" style="left:1531px;top:864px;font:11px/14px 'Liberation Sans', sans-serif;color:#000;letter-spacing:0.256px;">11:10</div>
<div class="t" style="left:1517px;top:880px;font:11px/14px 'Liberation Sans', sans-serif;color:#000;letter-spacing:0.094px;">15/12/2016</div>
<svg class="b" style="left:1580px;top:873px" width="16" height="15" viewBox="0 0 16 15"><rect x="0.5" y="0.5" width="15" height="14" fill="#2868C8" stroke="#6890C0"/><rect x="1" y="1" width="14" height="6" fill="#4A88E0"/><rect x="3" y="10" width="12" height="2" fill="#202840"/><circle cx="2.5" cy="11" r="1.2" fill="#F8C020"/></svg>
</body></html>
